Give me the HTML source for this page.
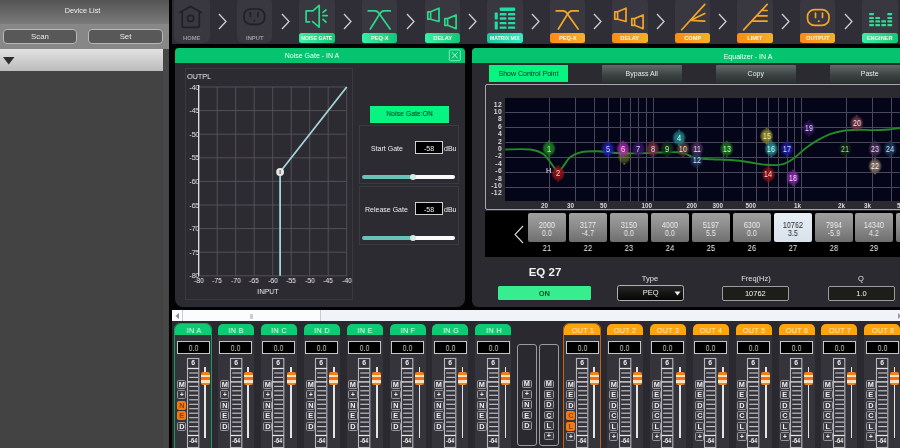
<!DOCTYPE html><html><head><meta charset="utf-8"><style>
*{margin:0;padding:0;box-sizing:border-box}
html,body{width:900px;height:448px;overflow:hidden;background:#030304;font-family:"Liberation Sans", sans-serif;}
.a{position:absolute}
.t{position:absolute;white-space:nowrap;line-height:1;will-change:transform}
</style></head><body>
<div class="a" style="left:0;top:0;width:168.5px;height:448px;background:#434343"></div>
<div class="a" style="left:0;top:0;width:168.5px;height:24px;background:linear-gradient(#545454,#7a7a7a)"></div>
<div class="a" style="left:0;top:24px;width:168.5px;height:25px;background:#878787"></div>
<div class="t" style="left:0.00px;top:7.08px;width:165px;text-align:center;font-size:7.3px;color:#f0f0f0;">Device List</div>
<div class="a" style="left:3px;top:29px;width:74px;height:15px;background:#585858;border:1.8px solid #b8b8b8;border-radius:4px"></div>
<div class="t" style="left:3.00px;top:33.14px;width:74px;text-align:center;font-size:7.8px;color:#eaeaea;">Scan</div>
<div class="a" style="left:88px;top:29px;width:75px;height:15px;background:#585858;border:1.8px solid #b8b8b8;border-radius:4px"></div>
<div class="t" style="left:88.00px;top:33.14px;width:75px;text-align:center;font-size:7.8px;color:#eaeaea;">Set</div>
<div class="a" style="left:0;top:49px;width:163.4px;height:21.8px;background:linear-gradient(#e2e2e2,#bcbcbc)"></div>
<div class="a" style="left:163.4px;top:49px;width:5.1px;height:399px;background:#474747"></div>
<svg class="a" style="left:0;top:50px" width="20" height="21"><path d="M3,7 L14.5,7 L8.7,14.5 Z" fill="#2e2e2e"/></svg>
<div class="a" style="left:172px;top:0;width:728px;height:44px;background:#2f2d35"></div>
<div class="a" style="left:174.3px;top:-3px;width:35.5px;height:46px;background:#39373f;border-radius:6px"></div>
<svg class="a" style="left:174.3px;top:1px" width="36" height="33"><path d="M5.8,11.4 L16.5,5.5 L27.6,11.4 M8.2,10.2 V24.6 Q8.2,26.4 10,26.4 H23.5 Q25.3,26.4 25.3,24.6 V10.2" stroke="#222027" fill="none" stroke-width="1.7" stroke-linecap="round" stroke-linejoin="round" stroke-width="2"/><circle cx="16.6" cy="17.4" r="3.1" stroke="#222027" fill="none" stroke-width="1.7" stroke-linecap="round" stroke-linejoin="round" stroke-width="2"/></svg>
<div class="t" style="left:174.30px;top:36.30px;width:35.5px;text-align:center;font-size:5.8px;font-weight:bold;color:#9a98a0;">HOME</div>
<svg class="a" style="left:217.0px;top:12px" width="12" height="20"><path d="M2,2 L9,9.5 L2,17" stroke="#cfcdd3" stroke-width="1.3" fill="none"/></svg>
<div class="a" style="left:236.9px;top:-3px;width:35.5px;height:46px;background:#39373f;border-radius:6px"></div>
<svg class="a" style="left:236.9px;top:1px" width="36" height="33"><rect x="7" y="8" width="20.6" height="15.3" rx="6.5" stroke="#222027" fill="none" stroke-width="1.7" stroke-linecap="round" stroke-linejoin="round" stroke-width="1.9"/><path d="M13.3,11.6 V15.4 M21,11.6 V15.4" stroke="#222027" fill="none" stroke-width="1.7" stroke-linecap="round" stroke-linejoin="round" stroke-width="1.9"/><circle cx="17.3" cy="19.6" r="1" fill="#222027"/></svg>
<div class="t" style="left:236.85px;top:36.30px;width:35.5px;text-align:center;font-size:5.8px;font-weight:bold;color:#9a98a0;">INPUT</div>
<svg class="a" style="left:279.6px;top:12px" width="12" height="20"><path d="M2,2 L9,9.5 L2,17" stroke="#cfcdd3" stroke-width="1.3" fill="none"/></svg>
<div class="a" style="left:299.4px;top:-3px;width:35.5px;height:46px;background:#39373f;border-radius:6px"></div>
<svg class="a" style="left:299.4px;top:1px" width="36" height="33"><path d="M13.9,9.8 H7.1 V20.8 H10.5 M13.6,20.6 L20.2,26.2 V4.3 L13.9,9.8" stroke="#2ad98c" fill="none" stroke-width="1.7" stroke-linecap="round" stroke-linejoin="round" stroke-width="1.8"/><path d="M24,11.4 L27,9 M24,14.6 H28.2 M24,18.4 L27,21.2" stroke="#2ad98c" fill="none" stroke-width="1.7" stroke-linecap="round" stroke-linejoin="round" stroke-width="1.6"/></svg>
<div class="a" style="left:299.4px;top:33.2px;width:35.5px;height:10.2px;background:linear-gradient(90deg,#36f0a6,#14c676);border-radius:2.5px"></div>
<div class="t" style="left:299.40px;top:36.34px;width:35.5px;text-align:center;font-size:5.1px;font-weight:bold;color:#fdfbe8;">NOISE GATE</div>
<svg class="a" style="left:342.1px;top:12px" width="12" height="20"><path d="M2,2 L9,9.5 L2,17" stroke="#cfcdd3" stroke-width="1.3" fill="none"/></svg>
<div class="a" style="left:361.9px;top:-3px;width:35.5px;height:46px;background:#39373f;border-radius:6px"></div>
<svg class="a" style="left:361.9px;top:1px" width="36" height="33"><path d="M6.2,9.9 H13.2 Q16.2,10 18,13.8 L28.1,28" stroke="#2ad98c" fill="none" stroke-width="1.7" stroke-linecap="round" stroke-linejoin="round" stroke-width="1.8"/><path d="M28.3,9.9 H21.8 Q19.2,10 17.2,13.8 L8.3,28" stroke="#2ad98c" fill="none" stroke-width="1.7" stroke-linecap="round" stroke-linejoin="round" stroke-width="1.8"/></svg>
<div class="a" style="left:361.9px;top:33.2px;width:35.5px;height:10.2px;background:linear-gradient(90deg,#36f0a6,#14c676);border-radius:2.5px"></div>
<div class="t" style="left:361.95px;top:36.05px;width:35.5px;text-align:center;font-size:5.7px;font-weight:bold;color:#fdfbe8;">PEQ-X</div>
<svg class="a" style="left:404.6px;top:12px" width="12" height="20"><path d="M2,2 L9,9.5 L2,17" stroke="#cfcdd3" stroke-width="1.3" fill="none"/></svg>
<div class="a" style="left:424.5px;top:-3px;width:35.5px;height:46px;background:#39373f;border-radius:6px"></div>
<svg class="a" style="left:424.5px;top:1px" width="36" height="33"><path d="M5.6,10.8 H2.8 V18.2 H5.6 Z M5.6,10.8 L14,7.2 V20.5 L5.6,18.2" stroke="#2ad98c" fill="none" stroke-width="1.7" stroke-linecap="round" stroke-linejoin="round" stroke-width="1.5"/><path d="M22.6,17.6 H19.8 V24.3 H22.6 Z M22.6,17.6 L31.1,14 V27.7 L22.6,24.3" stroke="#2ad98c" fill="none" stroke-width="1.7" stroke-linecap="round" stroke-linejoin="round" stroke-width="1.5"/></svg>
<div class="a" style="left:424.5px;top:33.2px;width:35.5px;height:10.2px;background:linear-gradient(90deg,#36f0a6,#14c676);border-radius:2.5px"></div>
<div class="t" style="left:424.50px;top:36.05px;width:35.5px;text-align:center;font-size:5.7px;font-weight:bold;color:#fdfbe8;">DELAY</div>
<svg class="a" style="left:467.2px;top:12px" width="12" height="20"><path d="M2,2 L9,9.5 L2,17" stroke="#cfcdd3" stroke-width="1.3" fill="none"/></svg>
<div class="a" style="left:487.1px;top:-3px;width:35.5px;height:46px;background:#39373f;border-radius:6px"></div>
<svg class="a" style="left:487.1px;top:1px" width="36" height="33"><rect x="12.7" y="6.4" width="15.5" height="3.5" rx="0.8" fill="#22dca6"/><rect x="7.7" y="11.4" width="3.1" height="7.2" rx="0.8" fill="#22dca6"/><rect x="7.7" y="20.5" width="3.1" height="8" rx="0.8" fill="#22dca6"/><rect x="12.7" y="12.1" width="6.8" height="2.4" rx="0.6" fill="#22dca6"/><rect x="21" y="12.1" width="7.2" height="2.4" rx="0.6" fill="#22dca6"/><rect x="12.7" y="16.3" width="6.8" height="2.4" rx="0.6" fill="#22dca6"/><rect x="21" y="16.3" width="7.2" height="2.4" rx="0.6" fill="#22dca6"/><rect x="12.7" y="20.9" width="6.8" height="2.4" rx="0.6" fill="#22dca6"/><rect x="21" y="20.9" width="7.2" height="2.4" rx="0.6" fill="#22dca6"/><rect x="12.7" y="25.4" width="6.8" height="2.4" rx="0.6" fill="#22dca6"/><rect x="21" y="25.4" width="7.2" height="2.4" rx="0.6" fill="#22dca6"/></svg>
<div class="a" style="left:487.1px;top:33.2px;width:35.5px;height:10.2px;background:linear-gradient(90deg,#14c6a2,#34eac2);border-radius:2.5px"></div>
<div class="t" style="left:487.05px;top:36.34px;width:35.5px;text-align:center;font-size:5.1px;font-weight:bold;color:#fdfbe8;">MATRIX MIX</div>
<svg class="a" style="left:529.8px;top:12px" width="12" height="20"><path d="M2,2 L9,9.5 L2,17" stroke="#cfcdd3" stroke-width="1.3" fill="none"/></svg>
<div class="a" style="left:549.6px;top:-3px;width:35.5px;height:46px;background:#39373f;border-radius:6px"></div>
<svg class="a" style="left:549.6px;top:1px" width="36" height="33"><path d="M6.2,9.9 H13.2 Q16.2,10 18,13.8 L28.1,28" stroke="#f3a52a" fill="none" stroke-width="1.7" stroke-linecap="round" stroke-linejoin="round" stroke-width="1.8"/><path d="M28.3,9.9 H21.8 Q19.2,10 17.2,13.8 L8.3,28" stroke="#f3a52a" fill="none" stroke-width="1.7" stroke-linecap="round" stroke-linejoin="round" stroke-width="1.8"/></svg>
<div class="a" style="left:549.6px;top:33.2px;width:35.5px;height:10.2px;background:linear-gradient(90deg,#ff8a12,#f4b02a);border-radius:2.5px"></div>
<div class="t" style="left:549.60px;top:36.05px;width:35.5px;text-align:center;font-size:5.7px;font-weight:bold;color:#fdfbe8;">PEQ-X</div>
<svg class="a" style="left:592.3px;top:12px" width="12" height="20"><path d="M2,2 L9,9.5 L2,17" stroke="#cfcdd3" stroke-width="1.3" fill="none"/></svg>
<div class="a" style="left:612.1px;top:-3px;width:35.5px;height:46px;background:#39373f;border-radius:6px"></div>
<svg class="a" style="left:612.1px;top:1px" width="36" height="33"><path d="M5.6,10.8 H2.8 V18.2 H5.6 Z M5.6,10.8 L14,7.2 V20.5 L5.6,18.2" stroke="#f3a52a" fill="none" stroke-width="1.7" stroke-linecap="round" stroke-linejoin="round" stroke-width="1.5"/><path d="M22.6,17.6 H19.8 V24.3 H22.6 Z M22.6,17.6 L31.1,14 V27.7 L22.6,24.3" stroke="#f3a52a" fill="none" stroke-width="1.7" stroke-linecap="round" stroke-linejoin="round" stroke-width="1.5"/></svg>
<div class="a" style="left:612.1px;top:33.2px;width:35.5px;height:10.2px;background:linear-gradient(90deg,#ff8a12,#f4b02a);border-radius:2.5px"></div>
<div class="t" style="left:612.15px;top:36.05px;width:35.5px;text-align:center;font-size:5.7px;font-weight:bold;color:#fdfbe8;">DELAY</div>
<svg class="a" style="left:654.9px;top:12px" width="12" height="20"><path d="M2,2 L9,9.5 L2,17" stroke="#cfcdd3" stroke-width="1.3" fill="none"/></svg>
<div class="a" style="left:674.7px;top:-3px;width:35.5px;height:46px;background:#39373f;border-radius:6px"></div>
<svg class="a" style="left:674.7px;top:1px" width="36" height="33"><path d="M6.7,28.8 L29.8,3.4 M15.8,19.3 L29.8,12.5 M15.8,19.3 L29.8,20.1" stroke="#f3a52a" fill="none" stroke-width="1.7" stroke-linecap="round" stroke-linejoin="round" stroke-width="1.9"/></svg>
<div class="a" style="left:674.7px;top:33.2px;width:35.5px;height:10.2px;background:linear-gradient(90deg,#ff8a12,#f4b02a);border-radius:2.5px"></div>
<div class="t" style="left:674.70px;top:36.05px;width:35.5px;text-align:center;font-size:5.7px;font-weight:bold;color:#fdfbe8;">COMP</div>
<svg class="a" style="left:717.4px;top:12px" width="12" height="20"><path d="M2,2 L9,9.5 L2,17" stroke="#cfcdd3" stroke-width="1.3" fill="none"/></svg>
<div class="a" style="left:737.2px;top:-3px;width:35.5px;height:46px;background:#39373f;border-radius:6px"></div>
<svg class="a" style="left:737.2px;top:1px" width="36" height="33"><path d="M6.6,28.8 L30.1,3.4 M25,9.5 H30.1 M20.5,14.8 H30.1 M16,20.1 H30.1" stroke="#f3a52a" fill="none" stroke-width="1.7" stroke-linecap="round" stroke-linejoin="round" stroke-width="1.9"/></svg>
<div class="a" style="left:737.2px;top:33.2px;width:35.5px;height:10.2px;background:linear-gradient(90deg,#ff8a12,#f4b02a);border-radius:2.5px"></div>
<div class="t" style="left:737.25px;top:36.05px;width:35.5px;text-align:center;font-size:5.7px;font-weight:bold;color:#fdfbe8;">LIMIT</div>
<svg class="a" style="left:780.0px;top:12px" width="12" height="20"><path d="M2,2 L9,9.5 L2,17" stroke="#cfcdd3" stroke-width="1.3" fill="none"/></svg>
<div class="a" style="left:799.8px;top:-3px;width:35.5px;height:46px;background:#39373f;border-radius:6px"></div>
<svg class="a" style="left:799.8px;top:1px" width="36" height="33"><rect x="7.5" y="8.6" width="21.5" height="15.8" rx="7" stroke="#f3a52a" fill="none" stroke-width="1.7" stroke-linecap="round" stroke-linejoin="round" stroke-width="1.8"/><path d="M15.5,12 V16.5 M22.5,12 V16.5" stroke="#f3a52a" fill="none" stroke-width="1.7" stroke-linecap="round" stroke-linejoin="round" stroke-width="1.7"/><circle cx="18.8" cy="20.2" r="1" fill="#f3a52a"/></svg>
<div class="a" style="left:799.8px;top:33.2px;width:35.5px;height:10.2px;background:linear-gradient(90deg,#ff8a12,#f4b02a);border-radius:2.5px"></div>
<div class="t" style="left:799.80px;top:36.05px;width:35.5px;text-align:center;font-size:5.7px;font-weight:bold;color:#fdfbe8;">OUTPUT</div>
<svg class="a" style="left:842.5px;top:12px" width="12" height="20"><path d="M2,2 L9,9.5 L2,17" stroke="#cfcdd3" stroke-width="1.3" fill="none"/></svg>
<div class="a" style="left:862.3px;top:-3px;width:35.5px;height:46px;background:#39373f;border-radius:6px"></div>
<svg class="a" style="left:862.3px;top:1px" width="36" height="33"><rect x="7.2" y="12.1" width="4.7" height="2.1" rx="0.5" fill="#3ad894"/><rect x="7.2" y="15.9" width="4.7" height="2.1" rx="0.5" fill="#3ad894"/><rect x="7.2" y="19.3" width="4.7" height="2.1" rx="0.5" fill="#3ad894"/><rect x="7.2" y="23.1" width="4.7" height="2.1" rx="0.5" fill="#3ad894"/><rect x="13.3" y="15.9" width="4.7" height="2.1" rx="0.5" fill="#3ad894"/><rect x="13.3" y="19.3" width="4.7" height="2.1" rx="0.5" fill="#3ad894"/><rect x="13.3" y="23.1" width="4.7" height="2.1" rx="0.5" fill="#3ad894"/><rect x="19.3" y="19.3" width="4.7" height="2.1" rx="0.5" fill="#3ad894"/><rect x="19.3" y="23.1" width="4.7" height="2.1" rx="0.5" fill="#3ad894"/><rect x="25.4" y="12.1" width="4.7" height="2.1" rx="0.5" fill="#3ad894"/><rect x="25.4" y="15.9" width="4.7" height="2.1" rx="0.5" fill="#3ad894"/><rect x="25.4" y="19.3" width="4.7" height="2.1" rx="0.5" fill="#3ad894"/><rect x="25.4" y="23.1" width="4.7" height="2.1" rx="0.5" fill="#3ad894"/></svg>
<div class="a" style="left:862.3px;top:33.2px;width:35.5px;height:10.2px;background:linear-gradient(90deg,#36f0a6,#14c676);border-radius:2.5px"></div>
<div class="t" style="left:862.35px;top:36.05px;width:35.5px;text-align:center;font-size:5.7px;font-weight:bold;color:#fdfbe8;">ENGINER</div>
<div class="a" style="left:175px;top:48px;width:290px;height:258.5px;background:#2d2b32;border-radius:4px 4px 8px 8px;overflow:hidden"><div class="a" style="left:0;top:0;width:290px;height:15px;background:#04c470"></div></div>
<div class="t" style="left:262.00px;top:52.43px;width:100px;text-align:center;font-size:7px;color:#f4fff8;">Noise Gate - IN A</div>
<svg class="a" style="left:448px;top:49px" width="14" height="13"><rect x="1.3" y="0.9" width="11" height="10.8" rx="1" fill="none" stroke="#8aeec0" stroke-width="0.9"/><path d="M4,3.4 L9.6,9.2 M9.6,3.4 L4,9.2" stroke="#b8f8d8" stroke-width="1"/></svg>
<svg class="a" style="left:0;top:0" width="470" height="310"><rect x="185.5" y="68.5" width="167" height="231" fill="none" stroke="#3a3840" stroke-width="1"/><line x1="217.2" y1="87.0" x2="217.2" y2="275.8" stroke="#56545c" stroke-width="0.9"/><line x1="235.7" y1="87.0" x2="235.7" y2="275.8" stroke="#56545c" stroke-width="0.9"/><line x1="254.2" y1="87.0" x2="254.2" y2="275.8" stroke="#56545c" stroke-width="0.9"/><line x1="272.7" y1="87.0" x2="272.7" y2="275.8" stroke="#56545c" stroke-width="0.9"/><line x1="291.2" y1="87.0" x2="291.2" y2="275.8" stroke="#56545c" stroke-width="0.9"/><line x1="309.7" y1="87.0" x2="309.7" y2="275.8" stroke="#56545c" stroke-width="0.9"/><line x1="328.2" y1="87.0" x2="328.2" y2="275.8" stroke="#56545c" stroke-width="0.9"/><line x1="346.7" y1="87.0" x2="346.7" y2="275.8" stroke="#56545c" stroke-width="0.9"/><line x1="198.7" y1="87.0" x2="346.7" y2="87.0" stroke="#56545c" stroke-width="0.9"/><line x1="198.7" y1="110.6" x2="346.7" y2="110.6" stroke="#56545c" stroke-width="0.9"/><line x1="198.7" y1="134.2" x2="346.7" y2="134.2" stroke="#56545c" stroke-width="0.9"/><line x1="198.7" y1="157.8" x2="346.7" y2="157.8" stroke="#56545c" stroke-width="0.9"/><line x1="198.7" y1="181.4" x2="346.7" y2="181.4" stroke="#56545c" stroke-width="0.9"/><line x1="198.7" y1="205.0" x2="346.7" y2="205.0" stroke="#56545c" stroke-width="0.9"/><line x1="198.7" y1="228.6" x2="346.7" y2="228.6" stroke="#56545c" stroke-width="0.9"/><line x1="198.7" y1="252.2" x2="346.7" y2="252.2" stroke="#56545c" stroke-width="0.9"/><line x1="198.7" y1="275.8" x2="346.7" y2="275.8" stroke="#56545c" stroke-width="0.9"/><line x1="198.7" y1="85.0" x2="198.7" y2="275.8" stroke="#e6e6ea" stroke-width="1.3"/><path d="M346.7,87.0 L280.1,172.0 L280.1,275.8" fill="none" stroke="#a4d2d8" stroke-width="1.8"/><circle cx="280.1" cy="172.0" r="3.9" fill="#e6e6e6"/><path d="M280.1,170.0 V174.0" stroke="#505058" stroke-width="1"/></svg>
<div class="t" style="left:187.00px;top:73.14px;font-size:8px;color:#f0f0f0;transform:scaleX(0.9);transform-origin:left center;">OUTPL</div>
<div class="t" style="left:170.00px;top:83.64px;width:29.3px;text-align:right;font-size:8px;color:#e8e8ea;transform:scaleX(0.86);transform-origin:right center;">-40</div>
<div class="t" style="left:170.00px;top:107.24px;width:29.3px;text-align:right;font-size:8px;color:#e8e8ea;transform:scaleX(0.86);transform-origin:right center;">-45</div>
<div class="t" style="left:170.00px;top:130.84px;width:29.3px;text-align:right;font-size:8px;color:#e8e8ea;transform:scaleX(0.86);transform-origin:right center;">-50</div>
<div class="t" style="left:170.00px;top:154.44px;width:29.3px;text-align:right;font-size:8px;color:#e8e8ea;transform:scaleX(0.86);transform-origin:right center;">-55</div>
<div class="t" style="left:170.00px;top:178.04px;width:29.3px;text-align:right;font-size:8px;color:#e8e8ea;transform:scaleX(0.86);transform-origin:right center;">-60</div>
<div class="t" style="left:170.00px;top:201.64px;width:29.3px;text-align:right;font-size:8px;color:#e8e8ea;transform:scaleX(0.86);transform-origin:right center;">-65</div>
<div class="t" style="left:170.00px;top:225.24px;width:29.3px;text-align:right;font-size:8px;color:#e8e8ea;transform:scaleX(0.86);transform-origin:right center;">-70</div>
<div class="t" style="left:170.00px;top:248.84px;width:29.3px;text-align:right;font-size:8px;color:#e8e8ea;transform:scaleX(0.86);transform-origin:right center;">-75</div>
<div class="t" style="left:170.00px;top:272.44px;width:29.3px;text-align:right;font-size:8px;color:#e8e8ea;transform:scaleX(0.86);transform-origin:right center;">-80</div>
<div class="t" style="left:188.70px;top:277.14px;width:20px;text-align:center;font-size:8px;color:#e8e8ea;transform:scaleX(0.86);transform-origin:center center;">-80</div>
<div class="t" style="left:207.20px;top:277.14px;width:20px;text-align:center;font-size:8px;color:#e8e8ea;transform:scaleX(0.86);transform-origin:center center;">-75</div>
<div class="t" style="left:225.70px;top:277.14px;width:20px;text-align:center;font-size:8px;color:#e8e8ea;transform:scaleX(0.86);transform-origin:center center;">-70</div>
<div class="t" style="left:244.20px;top:277.14px;width:20px;text-align:center;font-size:8px;color:#e8e8ea;transform:scaleX(0.86);transform-origin:center center;">-65</div>
<div class="t" style="left:262.70px;top:277.14px;width:20px;text-align:center;font-size:8px;color:#e8e8ea;transform:scaleX(0.86);transform-origin:center center;">-60</div>
<div class="t" style="left:281.20px;top:277.14px;width:20px;text-align:center;font-size:8px;color:#e8e8ea;transform:scaleX(0.86);transform-origin:center center;">-55</div>
<div class="t" style="left:299.70px;top:277.14px;width:20px;text-align:center;font-size:8px;color:#e8e8ea;transform:scaleX(0.86);transform-origin:center center;">-50</div>
<div class="t" style="left:318.20px;top:277.14px;width:20px;text-align:center;font-size:8px;color:#e8e8ea;transform:scaleX(0.86);transform-origin:center center;">-45</div>
<div class="t" style="left:336.70px;top:277.14px;width:20px;text-align:center;font-size:8px;color:#e8e8ea;transform:scaleX(0.86);transform-origin:center center;">-40</div>
<div class="t" style="left:248.00px;top:288.34px;width:40px;text-align:center;font-size:8px;color:#e8e8ea;transform:scaleX(0.9);transform-origin:center center;">INPUT</div>
<div class="a" style="left:370px;top:105.5px;width:79px;height:17px;background:#06f47f"></div>
<div class="t" style="left:370.00px;top:110.43px;width:79px;text-align:center;font-size:7.4px;color:#0a2e18;transform:scaleX(0.93);transform-origin:center center;">Noise Gate:ON</div>
<div class="a" style="left:358.5px;top:125px;width:100px;height:59px;border:1px solid #3b3941"></div>
<div class="t" style="left:371.00px;top:144.63px;font-size:7px;color:#ececf0;">Start Gate</div>
<div class="a" style="left:415px;top:140.8px;width:28px;height:13.2px;background:#000;border:1.3px solid #cfcfcf"></div>
<div class="t" style="left:415.00px;top:144.63px;width:28px;text-align:center;font-size:7px;color:#f0f0f0;">-58</div>
<div class="t" style="left:444.00px;top:144.63px;font-size:7px;color:#ececf0;">dBu</div>
<div class="a" style="left:361.5px;top:175px;width:93px;height:4px;background:linear-gradient(90deg,#68c2ba 0,#68c2ba 51px,#fafafa 51px);border-radius:2px"></div>
<div class="a" style="left:409.5px;top:174px;width:6px;height:6px;background:#d4ece6;border-radius:50%"></div>
<div class="a" style="left:358.5px;top:186px;width:100px;height:59px;border:1px solid #3b3941"></div>
<div class="t" style="left:365.00px;top:206.13px;font-size:7px;color:#ececf0;">Release Gate</div>
<div class="a" style="left:415px;top:202.3px;width:28px;height:13.2px;background:#000;border:1.3px solid #cfcfcf"></div>
<div class="t" style="left:415.00px;top:206.13px;width:28px;text-align:center;font-size:7px;color:#f0f0f0;">-58</div>
<div class="t" style="left:444.00px;top:206.13px;font-size:7px;color:#ececf0;">dBu</div>
<div class="a" style="left:361.5px;top:236px;width:93px;height:4px;background:linear-gradient(90deg,#68c2ba 0,#68c2ba 51px,#fafafa 51px);border-radius:2px"></div>
<div class="a" style="left:409.5px;top:235px;width:6px;height:6px;background:#d4ece6;border-radius:50%"></div>
<div class="a" style="left:472px;top:48px;width:520px;height:259px;background:#2c2a31;border-radius:4px 4px 6px 6px;overflow:hidden"><div class="a" style="left:0;top:0;width:520px;height:15px;background:#04c470"></div></div>
<div class="t" style="left:698.00px;top:52.63px;width:100px;text-align:center;font-size:7px;color:#f4fff8;">Equalizer - IN A</div>
<div class="a" style="left:489px;top:65px;width:79px;height:17px;background:#06f47f"></div>
<div class="t" style="left:489.00px;top:70.03px;width:79px;text-align:center;font-size:7px;color:#0a2e18;">Show Control Point</div>
<div class="a" style="left:602.4px;top:65px;width:79.5px;height:18px;background:linear-gradient(#606a6a,#3c4443 55%,#2a302f);border-radius:1px"></div>
<div class="t" style="left:602.40px;top:70.23px;width:79.5px;text-align:center;font-size:7px;color:#e4ecea;">Bypass All</div>
<div class="a" style="left:716.1px;top:65px;width:79.5px;height:18px;background:linear-gradient(#606a6a,#3c4443 55%,#2a302f);border-radius:1px"></div>
<div class="t" style="left:716.10px;top:70.23px;width:79.5px;text-align:center;font-size:7px;color:#e4ecea;">Copy</div>
<div class="a" style="left:829.8px;top:65px;width:79.5px;height:18px;background:linear-gradient(#606a6a,#3c4443 55%,#2a302f);border-radius:1px"></div>
<div class="t" style="left:829.80px;top:70.23px;width:79.5px;text-align:center;font-size:7px;color:#e4ecea;">Paste</div>
<div class="a" style="left:485px;top:84.3px;width:520px;height:125.7px;border:1.5px solid #a7a5ae;border-radius:2px"></div>
<div class="a" style="left:505.3px;top:97.7px;width:420px;height:103.6px;background:#05051a"></div>
<svg class="a" style="left:0;top:0" width="900" height="215"><defs><filter id="bl" x="-50%" y="-50%" width="200%" height="200%"><feGaussianBlur stdDeviation="0.7"/></filter></defs><line x1="505.3" y1="112.5" x2="900" y2="112.5" stroke="#484658" stroke-width="1"/><line x1="505.3" y1="127.5" x2="900" y2="127.5" stroke="#484658" stroke-width="1"/><line x1="505.3" y1="142.5" x2="900" y2="142.5" stroke="#484658" stroke-width="1"/><line x1="505.3" y1="157.5" x2="900" y2="157.5" stroke="#484658" stroke-width="1"/><line x1="505.3" y1="172.5" x2="900" y2="172.5" stroke="#484658" stroke-width="1"/><line x1="505.3" y1="187.5" x2="900" y2="187.5" stroke="#484658" stroke-width="1"/><line x1="549.5" y1="97.7" x2="549.5" y2="201.3" stroke="#484658" stroke-width="1"/><line x1="575.5" y1="97.7" x2="575.5" y2="201.3" stroke="#484658" stroke-width="1"/><line x1="594.5" y1="97.7" x2="594.5" y2="201.3" stroke="#484658" stroke-width="1"/><line x1="608.5" y1="97.7" x2="608.5" y2="201.3" stroke="#484658" stroke-width="1"/><line x1="620.5" y1="97.7" x2="620.5" y2="201.3" stroke="#484658" stroke-width="1"/><line x1="630.5" y1="97.7" x2="630.5" y2="201.3" stroke="#484658" stroke-width="1"/><line x1="638.5" y1="97.7" x2="638.5" y2="201.3" stroke="#484658" stroke-width="1"/><line x1="646.5" y1="97.7" x2="646.5" y2="201.3" stroke="#484658" stroke-width="1"/><line x1="653.5" y1="97.7" x2="653.5" y2="201.3" stroke="#484658" stroke-width="1"/><line x1="697.5" y1="97.7" x2="697.5" y2="201.3" stroke="#484658" stroke-width="1"/><line x1="723.5" y1="97.7" x2="723.5" y2="201.3" stroke="#484658" stroke-width="1"/><line x1="742.5" y1="97.7" x2="742.5" y2="201.3" stroke="#484658" stroke-width="1"/><line x1="756.5" y1="97.7" x2="756.5" y2="201.3" stroke="#484658" stroke-width="1"/><line x1="768.5" y1="97.7" x2="768.5" y2="201.3" stroke="#484658" stroke-width="1"/><line x1="778.5" y1="97.7" x2="778.5" y2="201.3" stroke="#484658" stroke-width="1"/><line x1="787.5" y1="97.7" x2="787.5" y2="201.3" stroke="#484658" stroke-width="1"/><line x1="794.5" y1="97.7" x2="794.5" y2="201.3" stroke="#484658" stroke-width="1"/><line x1="801.5" y1="97.7" x2="801.5" y2="201.3" stroke="#484658" stroke-width="1"/><line x1="846.5" y1="97.7" x2="846.5" y2="201.3" stroke="#484658" stroke-width="1"/><line x1="872.5" y1="97.7" x2="872.5" y2="201.3" stroke="#484658" stroke-width="1"/><line x1="891.5" y1="97.7" x2="891.5" y2="201.3" stroke="#484658" stroke-width="1"/><path d="M505.3,149.5 C509.5,149.5 523.8,148.7 530.2,149.5 C536.6,150.3 539.6,151.3 543.6,154.3 C547.6,157.3 551.8,164.8 554.3,167.7 C556.8,170.6 557.0,171.7 558.3,171.7 C559.6,171.7 560.3,170.1 562.3,167.7 C564.3,165.2 567.3,159.6 570.4,157.0 C573.5,154.4 576.6,153.1 581.1,152.2 C585.6,151.2 592.8,151.3 597.1,151.3 C601.5,151.3 603.5,151.7 607.2,152.0 C610.9,152.3 615.3,152.9 619.4,153.1 C623.5,153.3 627.6,153.4 631.7,153.4 C635.8,153.4 639.8,153.2 643.9,153.1 C648.0,153.0 652.0,152.8 656.1,152.6 C660.2,152.4 664.6,152.3 668.3,152.2 C672.0,152.1 675.3,152.0 678.1,152.2 C680.9,152.4 682.5,152.8 685.0,153.6 C687.5,154.4 690.3,156.4 692.8,157.2 C695.3,158.0 696.8,158.3 700.0,158.6 C703.2,158.9 706.5,158.9 712.1,159.2 C717.7,159.5 727.4,159.7 733.6,160.2 C739.9,160.7 744.2,161.5 749.6,162.3 C755.0,163.1 760.8,164.4 765.7,164.8 C770.6,165.2 775.5,165.3 779.1,164.9 C782.7,164.5 784.5,163.8 787.2,162.5 C789.9,161.2 792.1,159.6 795.2,157.2 C798.3,154.8 802.3,150.7 805.9,148.0 C809.5,145.3 812.6,143.2 816.6,140.9 C820.6,138.6 825.5,135.9 830.0,134.2 C834.5,132.5 838.9,131.4 843.4,130.7 C847.9,129.9 851.9,129.8 856.8,129.7 C861.7,129.6 867.5,130.1 872.9,130.1 C878.3,130.1 884.5,129.8 889.0,129.5 C893.5,129.2 898.2,128.2 900.0,128.0" fill="none" stroke="#248a26" stroke-width="1.9"/><defs><radialGradient id="g3" cx="50%" cy="50%" r="50%"><stop offset="0" stop-color="#8a9a20" stop-opacity="0.95"/><stop offset="0.65" stop-color="#8a9a20" stop-opacity="0.8"/><stop offset="1" stop-color="#8a9a20" stop-opacity="0.12"/></radialGradient><radialGradient id="g1" cx="50%" cy="50%" r="50%"><stop offset="0" stop-color="#1f8a22" stop-opacity="0.95"/><stop offset="0.65" stop-color="#1f8a22" stop-opacity="0.8"/><stop offset="1" stop-color="#1f8a22" stop-opacity="0.12"/></radialGradient><radialGradient id="g2" cx="50%" cy="50%" r="50%"><stop offset="0" stop-color="#9a1414" stop-opacity="0.95"/><stop offset="0.65" stop-color="#9a1414" stop-opacity="0.8"/><stop offset="1" stop-color="#9a1414" stop-opacity="0.12"/></radialGradient><radialGradient id="g5" cx="50%" cy="50%" r="50%"><stop offset="0" stop-color="#2020b8" stop-opacity="0.95"/><stop offset="0.65" stop-color="#2020b8" stop-opacity="0.8"/><stop offset="1" stop-color="#2020b8" stop-opacity="0.12"/></radialGradient><radialGradient id="g6" cx="50%" cy="50%" r="50%"><stop offset="0" stop-color="#a828a8" stop-opacity="0.95"/><stop offset="0.65" stop-color="#a828a8" stop-opacity="0.8"/><stop offset="1" stop-color="#a828a8" stop-opacity="0.12"/></radialGradient><radialGradient id="g7" cx="50%" cy="50%" r="50%"><stop offset="0" stop-color="#3a1866" stop-opacity="0.95"/><stop offset="0.65" stop-color="#3a1866" stop-opacity="0.8"/><stop offset="1" stop-color="#3a1866" stop-opacity="0.12"/></radialGradient><radialGradient id="g8" cx="50%" cy="50%" r="50%"><stop offset="0" stop-color="#74303e" stop-opacity="0.95"/><stop offset="0.65" stop-color="#74303e" stop-opacity="0.8"/><stop offset="1" stop-color="#74303e" stop-opacity="0.12"/></radialGradient><radialGradient id="g9" cx="50%" cy="50%" r="50%"><stop offset="0" stop-color="#143c16" stop-opacity="0.95"/><stop offset="0.65" stop-color="#143c16" stop-opacity="0.8"/><stop offset="1" stop-color="#143c16" stop-opacity="0.12"/></radialGradient><radialGradient id="g10" cx="50%" cy="50%" r="50%"><stop offset="0" stop-color="#5c4032" stop-opacity="0.95"/><stop offset="0.65" stop-color="#5c4032" stop-opacity="0.8"/><stop offset="1" stop-color="#5c4032" stop-opacity="0.12"/></radialGradient><radialGradient id="g4" cx="50%" cy="50%" r="50%"><stop offset="0" stop-color="#1e8c8c" stop-opacity="0.95"/><stop offset="0.65" stop-color="#1e8c8c" stop-opacity="0.8"/><stop offset="1" stop-color="#1e8c8c" stop-opacity="0.12"/></radialGradient><radialGradient id="g11" cx="50%" cy="50%" r="50%"><stop offset="0" stop-color="#4a3058" stop-opacity="0.95"/><stop offset="0.65" stop-color="#4a3058" stop-opacity="0.8"/><stop offset="1" stop-color="#4a3058" stop-opacity="0.12"/></radialGradient><radialGradient id="g12" cx="50%" cy="50%" r="50%"><stop offset="0" stop-color="#1e3a5c" stop-opacity="0.95"/><stop offset="0.65" stop-color="#1e3a5c" stop-opacity="0.8"/><stop offset="1" stop-color="#1e3a5c" stop-opacity="0.12"/></radialGradient><radialGradient id="g13" cx="50%" cy="50%" r="50%"><stop offset="0" stop-color="#1c7a1c" stop-opacity="0.95"/><stop offset="0.65" stop-color="#1c7a1c" stop-opacity="0.8"/><stop offset="1" stop-color="#1c7a1c" stop-opacity="0.12"/></radialGradient><radialGradient id="g14" cx="50%" cy="50%" r="50%"><stop offset="0" stop-color="#9a1414" stop-opacity="0.95"/><stop offset="0.65" stop-color="#9a1414" stop-opacity="0.8"/><stop offset="1" stop-color="#9a1414" stop-opacity="0.12"/></radialGradient><radialGradient id="g16" cx="50%" cy="50%" r="50%"><stop offset="0" stop-color="#2a9496" stop-opacity="0.95"/><stop offset="0.65" stop-color="#2a9496" stop-opacity="0.8"/><stop offset="1" stop-color="#2a9496" stop-opacity="0.12"/></radialGradient><radialGradient id="g15" cx="50%" cy="50%" r="50%"><stop offset="0" stop-color="#9a9430" stop-opacity="0.95"/><stop offset="0.65" stop-color="#9a9430" stop-opacity="0.8"/><stop offset="1" stop-color="#9a9430" stop-opacity="0.12"/></radialGradient><radialGradient id="g17" cx="50%" cy="50%" r="50%"><stop offset="0" stop-color="#1c1ca0" stop-opacity="0.95"/><stop offset="0.65" stop-color="#1c1ca0" stop-opacity="0.8"/><stop offset="1" stop-color="#1c1ca0" stop-opacity="0.12"/></radialGradient><radialGradient id="g18" cx="50%" cy="50%" r="50%"><stop offset="0" stop-color="#8a2aaa" stop-opacity="0.95"/><stop offset="0.65" stop-color="#8a2aaa" stop-opacity="0.8"/><stop offset="1" stop-color="#8a2aaa" stop-opacity="0.12"/></radialGradient><radialGradient id="g19" cx="50%" cy="50%" r="50%"><stop offset="0" stop-color="#341860" stop-opacity="0.95"/><stop offset="0.65" stop-color="#341860" stop-opacity="0.8"/><stop offset="1" stop-color="#341860" stop-opacity="0.12"/></radialGradient><radialGradient id="g20" cx="50%" cy="50%" r="50%"><stop offset="0" stop-color="#7a3a4a" stop-opacity="0.95"/><stop offset="0.65" stop-color="#7a3a4a" stop-opacity="0.8"/><stop offset="1" stop-color="#7a3a4a" stop-opacity="0.12"/></radialGradient><radialGradient id="g21" cx="50%" cy="50%" r="50%"><stop offset="0" stop-color="#0e2a10" stop-opacity="0.95"/><stop offset="0.65" stop-color="#0e2a10" stop-opacity="0.8"/><stop offset="1" stop-color="#0e2a10" stop-opacity="0.12"/></radialGradient><radialGradient id="g22" cx="50%" cy="50%" r="50%"><stop offset="0" stop-color="#8a7a6a" stop-opacity="0.95"/><stop offset="0.65" stop-color="#8a7a6a" stop-opacity="0.8"/><stop offset="1" stop-color="#8a7a6a" stop-opacity="0.12"/></radialGradient><radialGradient id="g23" cx="50%" cy="50%" r="50%"><stop offset="0" stop-color="#4a3058" stop-opacity="0.95"/><stop offset="0.65" stop-color="#4a3058" stop-opacity="0.8"/><stop offset="1" stop-color="#4a3058" stop-opacity="0.12"/></radialGradient><radialGradient id="g24" cx="50%" cy="50%" r="50%"><stop offset="0" stop-color="#1a3a5a" stop-opacity="0.95"/><stop offset="0.65" stop-color="#1a3a5a" stop-opacity="0.8"/><stop offset="1" stop-color="#1a3a5a" stop-opacity="0.12"/></radialGradient></defs><ellipse cx="624.3" cy="156.3" rx="6.9" ry="7.9" fill="url(#g3)" opacity="0.55"/><line x1="624.3" y1="148.0" x2="624.3" y2="149.70000000000002" stroke="#8a9a20" stroke-width="2" opacity="0.6"/><line x1="624.3" y1="162.9" x2="624.3" y2="164.60000000000002" stroke="#8a9a20" stroke-width="2" opacity="0.6"/><ellipse cx="549" cy="148.6" rx="6.9" ry="7.9" fill="url(#g1)" opacity="0.95"/><line x1="549" y1="140.29999999999998" x2="549" y2="142.0" stroke="#1f8a22" stroke-width="2" opacity="0.6"/><line x1="549" y1="155.2" x2="549" y2="156.9" stroke="#1f8a22" stroke-width="2" opacity="0.6"/><ellipse cx="558.2" cy="173.5" rx="6.9" ry="7.9" fill="url(#g2)" opacity="0.95"/><line x1="558.2" y1="165.2" x2="558.2" y2="166.9" stroke="#9a1414" stroke-width="2" opacity="0.6"/><line x1="558.2" y1="180.1" x2="558.2" y2="181.8" stroke="#9a1414" stroke-width="2" opacity="0.6"/><ellipse cx="607.8" cy="149" rx="6.9" ry="7.9" fill="url(#g5)" opacity="0.95"/><line x1="607.8" y1="140.7" x2="607.8" y2="142.4" stroke="#2020b8" stroke-width="2" opacity="0.6"/><line x1="607.8" y1="155.6" x2="607.8" y2="157.3" stroke="#2020b8" stroke-width="2" opacity="0.6"/><ellipse cx="623.1" cy="149" rx="6.9" ry="7.9" fill="url(#g6)" opacity="0.95"/><line x1="623.1" y1="140.7" x2="623.1" y2="142.4" stroke="#a828a8" stroke-width="2" opacity="0.6"/><line x1="623.1" y1="155.6" x2="623.1" y2="157.3" stroke="#a828a8" stroke-width="2" opacity="0.6"/><ellipse cx="638.4" cy="149" rx="6.9" ry="7.9" fill="url(#g7)" opacity="0.95"/><line x1="638.4" y1="140.7" x2="638.4" y2="142.4" stroke="#3a1866" stroke-width="2" opacity="0.6"/><line x1="638.4" y1="155.6" x2="638.4" y2="157.3" stroke="#3a1866" stroke-width="2" opacity="0.6"/><ellipse cx="652.5" cy="149" rx="6.9" ry="7.9" fill="url(#g8)" opacity="0.95"/><line x1="652.5" y1="140.7" x2="652.5" y2="142.4" stroke="#74303e" stroke-width="2" opacity="0.6"/><line x1="652.5" y1="155.6" x2="652.5" y2="157.3" stroke="#74303e" stroke-width="2" opacity="0.6"/><ellipse cx="667.1" cy="149" rx="6.9" ry="7.9" fill="url(#g9)" opacity="0.95"/><line x1="667.1" y1="140.7" x2="667.1" y2="142.4" stroke="#143c16" stroke-width="2" opacity="0.6"/><line x1="667.1" y1="155.6" x2="667.1" y2="157.3" stroke="#143c16" stroke-width="2" opacity="0.6"/><ellipse cx="683" cy="149" rx="6.9" ry="7.9" fill="url(#g10)" opacity="0.95"/><line x1="683" y1="140.7" x2="683" y2="142.4" stroke="#5c4032" stroke-width="2" opacity="0.6"/><line x1="683" y1="155.6" x2="683" y2="157.3" stroke="#5c4032" stroke-width="2" opacity="0.6"/><ellipse cx="679.1" cy="137.9" rx="6.9" ry="7.9" fill="url(#g4)" opacity="0.95"/><line x1="679.1" y1="129.6" x2="679.1" y2="131.3" stroke="#1e8c8c" stroke-width="2" opacity="0.6"/><line x1="679.1" y1="144.5" x2="679.1" y2="146.20000000000002" stroke="#1e8c8c" stroke-width="2" opacity="0.6"/><ellipse cx="697" cy="149" rx="6.9" ry="7.9" fill="url(#g11)" opacity="0.95"/><line x1="697" y1="140.7" x2="697" y2="142.4" stroke="#4a3058" stroke-width="2" opacity="0.6"/><line x1="697" y1="155.6" x2="697" y2="157.3" stroke="#4a3058" stroke-width="2" opacity="0.6"/><ellipse cx="696.5" cy="160" rx="6.9" ry="7.9" fill="url(#g12)" opacity="0.95"/><line x1="696.5" y1="151.7" x2="696.5" y2="153.4" stroke="#1e3a5c" stroke-width="2" opacity="0.6"/><line x1="696.5" y1="166.6" x2="696.5" y2="168.3" stroke="#1e3a5c" stroke-width="2" opacity="0.6"/><ellipse cx="726.7" cy="148.9" rx="6.9" ry="7.9" fill="url(#g13)" opacity="0.95"/><line x1="726.7" y1="140.6" x2="726.7" y2="142.3" stroke="#1c7a1c" stroke-width="2" opacity="0.6"/><line x1="726.7" y1="155.5" x2="726.7" y2="157.20000000000002" stroke="#1c7a1c" stroke-width="2" opacity="0.6"/><ellipse cx="768.4" cy="174.4" rx="6.9" ry="7.9" fill="url(#g14)" opacity="0.95"/><line x1="768.4" y1="166.1" x2="768.4" y2="167.8" stroke="#9a1414" stroke-width="2" opacity="0.6"/><line x1="768.4" y1="181.0" x2="768.4" y2="182.70000000000002" stroke="#9a1414" stroke-width="2" opacity="0.6"/><ellipse cx="771.3" cy="148.8" rx="6.9" ry="7.9" fill="url(#g16)" opacity="0.95"/><line x1="771.3" y1="140.5" x2="771.3" y2="142.20000000000002" stroke="#2a9496" stroke-width="2" opacity="0.6"/><line x1="771.3" y1="155.4" x2="771.3" y2="157.10000000000002" stroke="#2a9496" stroke-width="2" opacity="0.6"/><ellipse cx="766.6" cy="136.1" rx="6.9" ry="7.9" fill="url(#g15)" opacity="0.95"/><line x1="766.6" y1="127.8" x2="766.6" y2="129.5" stroke="#9a9430" stroke-width="2" opacity="0.6"/><line x1="766.6" y1="142.7" x2="766.6" y2="144.4" stroke="#9a9430" stroke-width="2" opacity="0.6"/><ellipse cx="786.9" cy="148.8" rx="6.9" ry="7.9" fill="url(#g17)" opacity="0.95"/><line x1="786.9" y1="140.5" x2="786.9" y2="142.20000000000002" stroke="#1c1ca0" stroke-width="2" opacity="0.6"/><line x1="786.9" y1="155.4" x2="786.9" y2="157.10000000000002" stroke="#1c1ca0" stroke-width="2" opacity="0.6"/><ellipse cx="792.9" cy="177.8" rx="6.9" ry="7.9" fill="url(#g18)" opacity="0.95"/><line x1="792.9" y1="169.5" x2="792.9" y2="171.20000000000002" stroke="#8a2aaa" stroke-width="2" opacity="0.6"/><line x1="792.9" y1="184.4" x2="792.9" y2="186.10000000000002" stroke="#8a2aaa" stroke-width="2" opacity="0.6"/><ellipse cx="808.9" cy="128.4" rx="6.9" ry="7.9" fill="url(#g19)" opacity="0.95"/><line x1="808.9" y1="120.10000000000001" x2="808.9" y2="121.80000000000001" stroke="#341860" stroke-width="2" opacity="0.6"/><line x1="808.9" y1="135.0" x2="808.9" y2="136.70000000000002" stroke="#341860" stroke-width="2" opacity="0.6"/><ellipse cx="856.7" cy="123.3" rx="6.9" ry="7.9" fill="url(#g20)" opacity="0.95"/><line x1="856.7" y1="115.0" x2="856.7" y2="116.7" stroke="#7a3a4a" stroke-width="2" opacity="0.6"/><line x1="856.7" y1="129.9" x2="856.7" y2="131.6" stroke="#7a3a4a" stroke-width="2" opacity="0.6"/><ellipse cx="845.1" cy="148.9" rx="6.9" ry="7.9" fill="url(#g21)" opacity="0.95"/><line x1="845.1" y1="140.6" x2="845.1" y2="142.3" stroke="#0e2a10" stroke-width="2" opacity="0.6"/><line x1="845.1" y1="155.5" x2="845.1" y2="157.20000000000002" stroke="#0e2a10" stroke-width="2" opacity="0.6"/><ellipse cx="875.1" cy="166.2" rx="6.9" ry="7.9" fill="url(#g22)" opacity="0.95"/><line x1="875.1" y1="157.89999999999998" x2="875.1" y2="159.6" stroke="#8a7a6a" stroke-width="2" opacity="0.6"/><line x1="875.1" y1="172.79999999999998" x2="875.1" y2="174.5" stroke="#8a7a6a" stroke-width="2" opacity="0.6"/><ellipse cx="875.1" cy="148.9" rx="6.9" ry="7.9" fill="url(#g23)" opacity="0.95"/><line x1="875.1" y1="140.6" x2="875.1" y2="142.3" stroke="#4a3058" stroke-width="2" opacity="0.6"/><line x1="875.1" y1="155.5" x2="875.1" y2="157.20000000000002" stroke="#4a3058" stroke-width="2" opacity="0.6"/><ellipse cx="890" cy="148.9" rx="6.9" ry="7.9" fill="url(#g24)" opacity="0.95"/><line x1="890" y1="140.6" x2="890" y2="142.3" stroke="#1a3a5a" stroke-width="2" opacity="0.6"/><line x1="890" y1="155.5" x2="890" y2="157.20000000000002" stroke="#1a3a5a" stroke-width="2" opacity="0.6"/></svg>
<div class="t" style="left:539.00px;top:144.55px;width:20px;text-align:center;font-size:8.4px;color:#b0f0a0;transform:scaleX(0.86);transform-origin:center center;">1</div>
<div class="t" style="left:548.20px;top:169.45px;width:20px;text-align:center;font-size:8.4px;color:#ffd0d0;transform:scaleX(0.86);transform-origin:center center;">2</div>
<div class="t" style="left:597.80px;top:144.95px;width:20px;text-align:center;font-size:8.4px;color:#d8d8ff;transform:scaleX(0.86);transform-origin:center center;">5</div>
<div class="t" style="left:613.10px;top:144.95px;width:20px;text-align:center;font-size:8.4px;color:#ffd8ff;transform:scaleX(0.86);transform-origin:center center;">6</div>
<div class="t" style="left:628.40px;top:144.95px;width:20px;text-align:center;font-size:8.4px;color:#e0d0ff;transform:scaleX(0.86);transform-origin:center center;">7</div>
<div class="t" style="left:642.50px;top:144.95px;width:20px;text-align:center;font-size:8.4px;color:#ffe0e0;transform:scaleX(0.86);transform-origin:center center;">8</div>
<div class="t" style="left:657.10px;top:144.95px;width:20px;text-align:center;font-size:8.4px;color:#c0ffc0;transform:scaleX(0.86);transform-origin:center center;">9</div>
<div class="t" style="left:673.00px;top:144.95px;width:20px;text-align:center;font-size:8.4px;color:#ffe8d8;transform:scaleX(0.86);transform-origin:center center;">10</div>
<div class="t" style="left:669.10px;top:133.85px;width:20px;text-align:center;font-size:8.4px;color:#d0ffff;transform:scaleX(0.86);transform-origin:center center;">4</div>
<div class="t" style="left:687.00px;top:144.95px;width:20px;text-align:center;font-size:8.4px;color:#f0e0ff;transform:scaleX(0.86);transform-origin:center center;">11</div>
<div class="t" style="left:686.50px;top:155.95px;width:20px;text-align:center;font-size:8.4px;color:#d8e8ff;transform:scaleX(0.86);transform-origin:center center;">12</div>
<div class="t" style="left:716.70px;top:144.85px;width:20px;text-align:center;font-size:8.4px;color:#c8ffc8;transform:scaleX(0.86);transform-origin:center center;">13</div>
<div class="t" style="left:758.40px;top:170.35px;width:20px;text-align:center;font-size:8.4px;color:#ffd8d8;transform:scaleX(0.86);transform-origin:center center;">14</div>
<div class="t" style="left:761.30px;top:144.75px;width:20px;text-align:center;font-size:8.4px;color:#d0ffff;transform:scaleX(0.86);transform-origin:center center;">16</div>
<div class="t" style="left:756.60px;top:132.05px;width:20px;text-align:center;font-size:8.4px;color:#f0e8a8;transform:scaleX(0.86);transform-origin:center center;">15</div>
<div class="t" style="left:776.90px;top:144.75px;width:20px;text-align:center;font-size:8.4px;color:#e0e0ff;transform:scaleX(0.86);transform-origin:center center;">17</div>
<div class="t" style="left:782.90px;top:173.75px;width:20px;text-align:center;font-size:8.4px;color:#f8e0ff;transform:scaleX(0.86);transform-origin:center center;">18</div>
<div class="t" style="left:798.90px;top:124.35px;width:20px;text-align:center;font-size:8.4px;color:#e8e0ff;transform:scaleX(0.86);transform-origin:center center;">19</div>
<div class="t" style="left:846.70px;top:119.25px;width:20px;text-align:center;font-size:8.4px;color:#ffe8e8;transform:scaleX(0.86);transform-origin:center center;">20</div>
<div class="t" style="left:835.10px;top:144.85px;width:20px;text-align:center;font-size:8.4px;color:#a8d8a8;transform:scaleX(0.86);transform-origin:center center;">21</div>
<div class="t" style="left:865.10px;top:162.15px;width:20px;text-align:center;font-size:8.4px;color:#fff4e8;transform:scaleX(0.86);transform-origin:center center;">22</div>
<div class="t" style="left:865.10px;top:144.85px;width:20px;text-align:center;font-size:8.4px;color:#f0e0ff;transform:scaleX(0.86);transform-origin:center center;">23</div>
<div class="t" style="left:880.00px;top:144.85px;width:20px;text-align:center;font-size:8.4px;color:#d8ecff;transform:scaleX(0.86);transform-origin:center center;">24</div>
<div class="t" style="left:545.50px;top:166.98px;font-size:7.5px;color:#e8e8f0;">H</div>
<div class="t" style="left:470.00px;top:101.52px;width:32px;text-align:right;font-size:6.8px;font-weight:bold;color:#d8d8e0;letter-spacing:0.3px;">12</div>
<div class="t" style="left:470.00px;top:108.92px;width:32px;text-align:right;font-size:6.8px;font-weight:bold;color:#d8d8e0;letter-spacing:0.3px;">10</div>
<div class="t" style="left:470.00px;top:116.32px;width:32px;text-align:right;font-size:6.8px;font-weight:bold;color:#d8d8e0;letter-spacing:0.3px;">8</div>
<div class="t" style="left:470.00px;top:123.72px;width:32px;text-align:right;font-size:6.8px;font-weight:bold;color:#d8d8e0;letter-spacing:0.3px;">6</div>
<div class="t" style="left:470.00px;top:131.12px;width:32px;text-align:right;font-size:6.8px;font-weight:bold;color:#d8d8e0;letter-spacing:0.3px;">4</div>
<div class="t" style="left:470.00px;top:138.52px;width:32px;text-align:right;font-size:6.8px;font-weight:bold;color:#d8d8e0;letter-spacing:0.3px;">2</div>
<div class="t" style="left:470.00px;top:145.92px;width:32px;text-align:right;font-size:6.8px;font-weight:bold;color:#d8d8e0;letter-spacing:0.3px;">0</div>
<div class="t" style="left:470.00px;top:153.32px;width:32px;text-align:right;font-size:6.8px;font-weight:bold;color:#d8d8e0;letter-spacing:0.3px;">-2</div>
<div class="t" style="left:470.00px;top:160.72px;width:32px;text-align:right;font-size:6.8px;font-weight:bold;color:#d8d8e0;letter-spacing:0.3px;">-4</div>
<div class="t" style="left:470.00px;top:168.12px;width:32px;text-align:right;font-size:6.8px;font-weight:bold;color:#d8d8e0;letter-spacing:0.3px;">-6</div>
<div class="t" style="left:470.00px;top:175.52px;width:32px;text-align:right;font-size:6.8px;font-weight:bold;color:#d8d8e0;letter-spacing:0.3px;">-8</div>
<div class="t" style="left:470.00px;top:182.92px;width:32px;text-align:right;font-size:6.8px;font-weight:bold;color:#d8d8e0;letter-spacing:0.3px;">-10</div>
<div class="t" style="left:470.00px;top:190.32px;width:32px;text-align:right;font-size:6.8px;font-weight:bold;color:#d8d8e0;letter-spacing:0.3px;">-12</div>
<div class="t" style="left:518.30px;top:202.56px;width:30px;text-align:right;font-size:6.3px;font-weight:bold;color:#d8d8e0;">20</div>
<div class="t" style="left:544.45px;top:202.56px;width:30px;text-align:right;font-size:6.3px;font-weight:bold;color:#d8d8e0;">30</div>
<div class="t" style="left:577.40px;top:202.56px;width:30px;text-align:right;font-size:6.3px;font-weight:bold;color:#d8d8e0;">50</div>
<div class="t" style="left:622.10px;top:202.56px;width:30px;text-align:right;font-size:6.3px;font-weight:bold;color:#d8d8e0;">100</div>
<div class="t" style="left:666.80px;top:202.56px;width:30px;text-align:right;font-size:6.3px;font-weight:bold;color:#d8d8e0;">200</div>
<div class="t" style="left:692.95px;top:202.56px;width:30px;text-align:right;font-size:6.3px;font-weight:bold;color:#d8d8e0;">300</div>
<div class="t" style="left:725.90px;top:202.56px;width:30px;text-align:right;font-size:6.3px;font-weight:bold;color:#d8d8e0;">500</div>
<div class="t" style="left:770.60px;top:202.56px;width:30px;text-align:right;font-size:6.3px;font-weight:bold;color:#d8d8e0;">1k</div>
<div class="t" style="left:815.30px;top:202.56px;width:30px;text-align:right;font-size:6.3px;font-weight:bold;color:#d8d8e0;">2k</div>
<div class="t" style="left:841.45px;top:202.56px;width:30px;text-align:right;font-size:6.3px;font-weight:bold;color:#d8d8e0;">3k</div>
<div class="t" style="left:874.40px;top:202.56px;width:30px;text-align:right;font-size:6.3px;font-weight:bold;color:#d8d8e0;">5k</div>
<div class="a" style="left:485px;top:211.2px;width:420px;height:46px;background:#000"></div>
<svg class="a" style="left:512px;top:224px" width="14" height="22"><path d="M11,2 L3,10.5 L11,19" fill="none" stroke="#d8d8d8" stroke-width="1.1"/></svg>
<div class="a" style="left:528.2px;top:213px;width:38px;height:28.7px;background:linear-gradient(#a0a0a0,#8a8a8a 50%,#6e6e6e);border-radius:2px"></div>
<div class="t" style="left:528.20px;top:221.55px;width:37.8px;text-align:center;font-size:8.2px;color:#ececec;transform:scaleX(0.88);transform-origin:center center;">2000</div>
<div class="t" style="left:528.20px;top:229.95px;width:37.8px;text-align:center;font-size:8.2px;color:#ececec;transform:scaleX(0.88);transform-origin:center center;">0.0</div>
<div class="t" style="left:528.20px;top:245.45px;width:37.8px;text-align:center;font-size:8.2px;color:#f0f0f0;transform:scaleX(0.9);transform-origin:center center;">21</div>
<div class="a" style="left:569.1px;top:213px;width:38px;height:28.7px;background:linear-gradient(#a0a0a0,#8a8a8a 50%,#6e6e6e);border-radius:2px"></div>
<div class="t" style="left:569.10px;top:221.55px;width:37.8px;text-align:center;font-size:8.2px;color:#ececec;transform:scaleX(0.88);transform-origin:center center;">3177</div>
<div class="t" style="left:569.10px;top:229.95px;width:37.8px;text-align:center;font-size:8.2px;color:#ececec;transform:scaleX(0.88);transform-origin:center center;">-4.7</div>
<div class="t" style="left:569.10px;top:245.45px;width:37.8px;text-align:center;font-size:8.2px;color:#f0f0f0;transform:scaleX(0.9);transform-origin:center center;">22</div>
<div class="a" style="left:610.0px;top:213px;width:38px;height:28.7px;background:linear-gradient(#a0a0a0,#8a8a8a 50%,#6e6e6e);border-radius:2px"></div>
<div class="t" style="left:610.00px;top:221.55px;width:37.8px;text-align:center;font-size:8.2px;color:#ececec;transform:scaleX(0.88);transform-origin:center center;">3150</div>
<div class="t" style="left:610.00px;top:229.95px;width:37.8px;text-align:center;font-size:8.2px;color:#ececec;transform:scaleX(0.88);transform-origin:center center;">0.0</div>
<div class="t" style="left:610.00px;top:245.45px;width:37.8px;text-align:center;font-size:8.2px;color:#f0f0f0;transform:scaleX(0.9);transform-origin:center center;">23</div>
<div class="a" style="left:650.9px;top:213px;width:38px;height:28.7px;background:linear-gradient(#a0a0a0,#8a8a8a 50%,#6e6e6e);border-radius:2px"></div>
<div class="t" style="left:650.90px;top:221.55px;width:37.8px;text-align:center;font-size:8.2px;color:#ececec;transform:scaleX(0.88);transform-origin:center center;">4000</div>
<div class="t" style="left:650.90px;top:229.95px;width:37.8px;text-align:center;font-size:8.2px;color:#ececec;transform:scaleX(0.88);transform-origin:center center;">0.0</div>
<div class="t" style="left:650.90px;top:245.45px;width:37.8px;text-align:center;font-size:8.2px;color:#f0f0f0;transform:scaleX(0.9);transform-origin:center center;">24</div>
<div class="a" style="left:691.8px;top:213px;width:38px;height:28.7px;background:linear-gradient(#a0a0a0,#8a8a8a 50%,#6e6e6e);border-radius:2px"></div>
<div class="t" style="left:691.80px;top:221.55px;width:37.8px;text-align:center;font-size:8.2px;color:#ececec;transform:scaleX(0.88);transform-origin:center center;">5197</div>
<div class="t" style="left:691.80px;top:229.95px;width:37.8px;text-align:center;font-size:8.2px;color:#ececec;transform:scaleX(0.88);transform-origin:center center;">5.5</div>
<div class="t" style="left:691.80px;top:245.45px;width:37.8px;text-align:center;font-size:8.2px;color:#f0f0f0;transform:scaleX(0.9);transform-origin:center center;">25</div>
<div class="a" style="left:732.7px;top:213px;width:38px;height:28.7px;background:linear-gradient(#a0a0a0,#8a8a8a 50%,#6e6e6e);border-radius:2px"></div>
<div class="t" style="left:732.70px;top:221.55px;width:37.8px;text-align:center;font-size:8.2px;color:#ececec;transform:scaleX(0.88);transform-origin:center center;">6300</div>
<div class="t" style="left:732.70px;top:229.95px;width:37.8px;text-align:center;font-size:8.2px;color:#ececec;transform:scaleX(0.88);transform-origin:center center;">0.0</div>
<div class="t" style="left:732.70px;top:245.45px;width:37.8px;text-align:center;font-size:8.2px;color:#f0f0f0;transform:scaleX(0.9);transform-origin:center center;">26</div>
<div class="a" style="left:773.6px;top:213px;width:38px;height:28.7px;background:linear-gradient(#e8eef4,#d8e2ec);border-radius:2px"></div>
<div class="t" style="left:773.60px;top:221.55px;width:37.8px;text-align:center;font-size:8.2px;color:#2a2a30;transform:scaleX(0.88);transform-origin:center center;">10762</div>
<div class="t" style="left:773.60px;top:229.95px;width:37.8px;text-align:center;font-size:8.2px;color:#2a2a30;transform:scaleX(0.88);transform-origin:center center;">3.5</div>
<div class="t" style="left:773.60px;top:245.45px;width:37.8px;text-align:center;font-size:8.2px;color:#f0f0f0;transform:scaleX(0.9);transform-origin:center center;">27</div>
<div class="a" style="left:814.5px;top:213px;width:38px;height:28.7px;background:linear-gradient(#a0a0a0,#8a8a8a 50%,#6e6e6e);border-radius:2px"></div>
<div class="t" style="left:814.50px;top:221.55px;width:37.8px;text-align:center;font-size:8.2px;color:#ececec;transform:scaleX(0.88);transform-origin:center center;">7994</div>
<div class="t" style="left:814.50px;top:229.95px;width:37.8px;text-align:center;font-size:8.2px;color:#ececec;transform:scaleX(0.88);transform-origin:center center;">-5.9</div>
<div class="t" style="left:814.50px;top:245.45px;width:37.8px;text-align:center;font-size:8.2px;color:#f0f0f0;transform:scaleX(0.9);transform-origin:center center;">28</div>
<div class="a" style="left:855.4px;top:213px;width:38px;height:28.7px;background:linear-gradient(#a0a0a0,#8a8a8a 50%,#6e6e6e);border-radius:2px"></div>
<div class="t" style="left:855.40px;top:221.55px;width:37.8px;text-align:center;font-size:8.2px;color:#ececec;transform:scaleX(0.88);transform-origin:center center;">14340</div>
<div class="t" style="left:855.40px;top:229.95px;width:37.8px;text-align:center;font-size:8.2px;color:#ececec;transform:scaleX(0.88);transform-origin:center center;">4.2</div>
<div class="t" style="left:855.40px;top:245.45px;width:37.8px;text-align:center;font-size:8.2px;color:#f0f0f0;transform:scaleX(0.9);transform-origin:center center;">29</div>
<div class="a" style="left:896.3px;top:213px;width:38px;height:28.7px;background:linear-gradient(#a0a0a0,#8a8a8a 50%,#6e6e6e);border-radius:2px"></div>
<div class="t" style="left:896.30px;top:221.55px;width:37.8px;text-align:center;font-size:8.2px;color:#ececec;transform:scaleX(0.88);transform-origin:center center;"></div>
<div class="t" style="left:896.30px;top:229.95px;width:37.8px;text-align:center;font-size:8.2px;color:#ececec;transform:scaleX(0.88);transform-origin:center center;"></div>
<div class="t" style="left:896.30px;top:245.45px;width:37.8px;text-align:center;font-size:8.2px;color:#f0f0f0;transform:scaleX(0.9);transform-origin:center center;">30</div>
<div class="t" style="left:519.50px;top:266.66px;width:50px;text-align:center;font-size:11.5px;font-weight:bold;color:#f0f0f0;">EQ 27</div>
<div class="a" style="left:498.3px;top:286.3px;width:92.5px;height:14px;background:#36ee8e;border-radius:1.5px"></div>
<div class="t" style="left:498.30px;top:289.69px;width:92.5px;text-align:center;font-size:7.5px;font-weight:bold;color:#12502c;">ON</div>
<div class="t" style="left:620.30px;top:274.88px;width:60px;text-align:center;font-size:7.5px;color:#e0e0e4;">Type</div>
<div class="t" style="left:725.50px;top:274.88px;width:60px;text-align:center;font-size:7.5px;color:#e0e0e4;">Freq(Hz)</div>
<div class="t" style="left:831.00px;top:274.88px;width:60px;text-align:center;font-size:7.5px;color:#e0e0e4;">Q</div>
<div class="a" style="left:617px;top:285.1px;width:66.8px;height:15.6px;background:linear-gradient(#262626,#050505);border:1.7px solid #b0b0b0;border-radius:2.5px"></div>
<div class="t" style="left:617.50px;top:289.38px;width:65.5px;text-align:center;font-size:7.5px;color:#f0f0f0;">PEQ</div>
<svg class="a" style="left:674px;top:290px" width="8" height="7"><path d="M0.5,1.5 L6.5,1.5 L3.5,5.5 Z" fill="#f0f0f0"/></svg>
<div class="a" style="left:722.2px;top:285.7px;width:66.7px;height:15px;background:#1d1d1a;border:1.5px solid #9c9c9c;border-radius:2px"></div>
<div class="t" style="left:722.20px;top:289.58px;width:66.7px;text-align:center;font-size:7.5px;color:#f0f0f0;">10762</div>
<div class="a" style="left:828.2px;top:285.7px;width:66.7px;height:15px;background:#1d1d1a;border:1.5px solid #9c9c9c;border-radius:2px"></div>
<div class="t" style="left:828.20px;top:289.58px;width:66.7px;text-align:center;font-size:7.5px;color:#f0f0f0;">1.0</div>
<div class="a" style="left:172px;top:321px;width:728px;height:127px;background:#2b2930"></div>
<div class="a" style="left:172px;top:310px;width:728px;height:10.7px;background:#f0f3f8"></div>
<div class="a" style="left:172px;top:310px;width:149px;height:10.7px;background:#fbfcfd;border-right:1px solid #c8ccd2"></div>
<div class="a" style="left:182px;top:310px;width:1px;height:10.7px;background:#c8ccd2"></div>
<svg class="a" style="left:173px;top:311px" width="9" height="10"><path d="M6,2 L2.5,5 L6,8 Z" fill="#8a8e94"/></svg>
<div class="t" style="left:241px;width:20px;top:312.5px;text-align:center;font-size:6px;color:#9aa0a8;letter-spacing:-0.5px">|||</div>
<svg class="a" style="left:896.5px;top:310.5px" width="6" height="10"><path d="M1,2 L4.5,5 L1,8 Z" fill="#9a9ea4"/></svg>
<div class="a" style="left:175.0px;top:335px;width:36px;height:113px;background:#36343b"></div>
<div class="a" style="left:175.0px;top:323.5px;width:36px;height:11.6px;background:#0ccb72;border-radius:5px 5px 0 0"></div>
<div class="t" style="left:175.50px;top:326.74px;width:36px;text-align:center;font-size:8px;color:#e8fff2;transform:scaleX(0.92);transform-origin:center center;letter-spacing:0.2px;">IN A</div>
<div class="a" style="left:174.0px;top:322.5px;width:38px;height:130px;border:1.2px solid #1a9c60;border-radius:6px"></div>
<div class="a" style="left:176.5px;top:341px;width:33px;height:13px;background:#000;border:1.3px solid #c6c6c6"></div>
<div class="t" style="left:176.50px;top:343.60px;width:33px;text-align:center;font-size:8.3px;color:#d2d2c6;transform:scaleX(0.85);transform-origin:center center;">0.0</div>
<svg class="a" style="left:185.6px;top:357px" width="14.3" height="92"><rect x="1.5" y="1.5" width="11.3" height="89" fill="none" stroke="#b4b4bc" stroke-width="1.1"/><line x1="1.5" y1="11.5" x2="12.8" y2="11.5" stroke="#e4e4e8" stroke-width="1.3"/><line x1="3.2" y1="16.0" x2="12.100000000000001" y2="16.0" stroke="#c8c8d0" stroke-width="1.1"/><line x1="3.2" y1="20.4" x2="12.100000000000001" y2="20.4" stroke="#c8c8d0" stroke-width="1.1"/><line x1="1.5" y1="24.9" x2="12.8" y2="24.9" stroke="#e4e4e8" stroke-width="1.3"/><line x1="3.2" y1="29.4" x2="12.100000000000001" y2="29.4" stroke="#c8c8d0" stroke-width="1.1"/><line x1="3.2" y1="33.8" x2="12.100000000000001" y2="33.8" stroke="#c8c8d0" stroke-width="1.1"/><line x1="3.2" y1="38.3" x2="12.100000000000001" y2="38.3" stroke="#c8c8d0" stroke-width="1.1"/><line x1="3.2" y1="42.8" x2="12.100000000000001" y2="42.8" stroke="#c8c8d0" stroke-width="1.1"/><line x1="3.2" y1="47.3" x2="12.100000000000001" y2="47.3" stroke="#c8c8d0" stroke-width="1.1"/><line x1="3.2" y1="51.7" x2="12.100000000000001" y2="51.7" stroke="#c8c8d0" stroke-width="1.1"/><line x1="3.2" y1="56.2" x2="12.100000000000001" y2="56.2" stroke="#c8c8d0" stroke-width="1.1"/><line x1="3.2" y1="60.7" x2="12.100000000000001" y2="60.7" stroke="#c8c8d0" stroke-width="1.1"/><line x1="3.2" y1="65.1" x2="12.100000000000001" y2="65.1" stroke="#c8c8d0" stroke-width="1.1"/><line x1="3.2" y1="69.6" x2="12.100000000000001" y2="69.6" stroke="#c8c8d0" stroke-width="1.1"/><line x1="3.2" y1="74.1" x2="12.100000000000001" y2="74.1" stroke="#c8c8d0" stroke-width="1.1"/><line x1="1.5" y1="78.5" x2="12.8" y2="78.5" stroke="#e4e4e8" stroke-width="1.3"/></svg>
<div class="t" style="left:186.60px;top:360.12px;width:12.3px;text-align:center;font-size:6.8px;font-weight:bold;color:#f0f0f0;">6</div>
<div class="t" style="left:185.60px;top:438.02px;width:14.3px;text-align:center;font-size:6.8px;font-weight:bold;color:#f0f0f0;transform:scaleX(0.85);transform-origin:center center;">-64</div>
<div class="a" style="left:204.4px;top:366.7px;width:1.6px;height:71px;background:#e4e4e4"></div>
<div class="a" style="left:200.7px;top:371.8px;width:9px;height:13.3px;background:linear-gradient(#f08018 0,#f08018 2.6px,#fbe0c0 2.6px,#fbe0c0 5.2px,#f07010 5.2px,#f07010 8.2px,#fbe0c0 8.2px,#fbe0c0 10.8px,#f08018 10.8px);border-radius:2px"></div>
<div class="a" style="left:176.8px;top:380.0px;width:9.6px;height:8.8px;background:#3e3c43;border:1px solid #96949c;border-radius:1.5px"></div>
<div class="t" style="left:176.80px;top:380.88px;width:9.6px;text-align:center;font-size:7.3px;font-weight:bold;color:#f0f0f0;">M</div>
<div class="a" style="left:176.8px;top:390.4px;width:9.6px;height:8.8px;background:#3e3c43;border:1px solid #96949c;border-radius:1.5px"></div>
<div class="t" style="left:176.80px;top:391.72px;width:9.6px;text-align:center;font-size:6.5px;font-weight:bold;color:#f0f0f0;">+</div>
<div class="a" style="left:176.8px;top:400.9px;width:9.6px;height:8.8px;background:#f27a12;border:1px solid #f27a12;border-radius:1.5px"></div>
<div class="t" style="left:176.80px;top:401.78px;width:9.6px;text-align:center;font-size:7.3px;font-weight:bold;color:#8a3c00;">N</div>
<div class="a" style="left:176.8px;top:411.4px;width:9.6px;height:8.8px;background:#f27a12;border:1px solid #f27a12;border-radius:1.5px"></div>
<div class="t" style="left:176.80px;top:412.23px;width:9.6px;text-align:center;font-size:7.3px;font-weight:bold;color:#8a3c00;">E</div>
<div class="a" style="left:176.8px;top:421.8px;width:9.6px;height:8.8px;background:#3e3c43;border:1px solid #96949c;border-radius:1.5px"></div>
<div class="t" style="left:176.80px;top:422.68px;width:9.6px;text-align:center;font-size:7.3px;font-weight:bold;color:#f0f0f0;">D</div>
<div class="a" style="left:217.9px;top:335px;width:36px;height:113px;background:#36343b"></div>
<div class="a" style="left:217.9px;top:323.5px;width:36px;height:11.6px;background:#0ccb72;border-radius:5px 5px 0 0"></div>
<div class="t" style="left:218.40px;top:326.74px;width:36px;text-align:center;font-size:8px;color:#e8fff2;transform:scaleX(0.92);transform-origin:center center;letter-spacing:0.2px;">IN B</div>
<div class="a" style="left:219.4px;top:341px;width:33px;height:13px;background:#000;border:1.3px solid #c6c6c6"></div>
<div class="t" style="left:219.40px;top:343.60px;width:33px;text-align:center;font-size:8.3px;color:#d2d2c6;transform:scaleX(0.85);transform-origin:center center;">0.0</div>
<svg class="a" style="left:228.5px;top:357px" width="14.3" height="92"><rect x="1.5" y="1.5" width="11.3" height="89" fill="none" stroke="#b4b4bc" stroke-width="1.1"/><line x1="1.5" y1="11.5" x2="12.8" y2="11.5" stroke="#e4e4e8" stroke-width="1.3"/><line x1="3.2" y1="16.0" x2="12.100000000000001" y2="16.0" stroke="#c8c8d0" stroke-width="1.1"/><line x1="3.2" y1="20.4" x2="12.100000000000001" y2="20.4" stroke="#c8c8d0" stroke-width="1.1"/><line x1="1.5" y1="24.9" x2="12.8" y2="24.9" stroke="#e4e4e8" stroke-width="1.3"/><line x1="3.2" y1="29.4" x2="12.100000000000001" y2="29.4" stroke="#c8c8d0" stroke-width="1.1"/><line x1="3.2" y1="33.8" x2="12.100000000000001" y2="33.8" stroke="#c8c8d0" stroke-width="1.1"/><line x1="3.2" y1="38.3" x2="12.100000000000001" y2="38.3" stroke="#c8c8d0" stroke-width="1.1"/><line x1="3.2" y1="42.8" x2="12.100000000000001" y2="42.8" stroke="#c8c8d0" stroke-width="1.1"/><line x1="3.2" y1="47.3" x2="12.100000000000001" y2="47.3" stroke="#c8c8d0" stroke-width="1.1"/><line x1="3.2" y1="51.7" x2="12.100000000000001" y2="51.7" stroke="#c8c8d0" stroke-width="1.1"/><line x1="3.2" y1="56.2" x2="12.100000000000001" y2="56.2" stroke="#c8c8d0" stroke-width="1.1"/><line x1="3.2" y1="60.7" x2="12.100000000000001" y2="60.7" stroke="#c8c8d0" stroke-width="1.1"/><line x1="3.2" y1="65.1" x2="12.100000000000001" y2="65.1" stroke="#c8c8d0" stroke-width="1.1"/><line x1="3.2" y1="69.6" x2="12.100000000000001" y2="69.6" stroke="#c8c8d0" stroke-width="1.1"/><line x1="3.2" y1="74.1" x2="12.100000000000001" y2="74.1" stroke="#c8c8d0" stroke-width="1.1"/><line x1="1.5" y1="78.5" x2="12.8" y2="78.5" stroke="#e4e4e8" stroke-width="1.3"/></svg>
<div class="t" style="left:229.50px;top:360.12px;width:12.3px;text-align:center;font-size:6.8px;font-weight:bold;color:#f0f0f0;">6</div>
<div class="t" style="left:228.50px;top:438.02px;width:14.3px;text-align:center;font-size:6.8px;font-weight:bold;color:#f0f0f0;transform:scaleX(0.85);transform-origin:center center;">-64</div>
<div class="a" style="left:247.3px;top:366.7px;width:1.6px;height:71px;background:#e4e4e4"></div>
<div class="a" style="left:243.6px;top:371.8px;width:9px;height:13.3px;background:linear-gradient(#f08018 0,#f08018 2.6px,#fbe0c0 2.6px,#fbe0c0 5.2px,#f07010 5.2px,#f07010 8.2px,#fbe0c0 8.2px,#fbe0c0 10.8px,#f08018 10.8px);border-radius:2px"></div>
<div class="a" style="left:219.7px;top:380.0px;width:9.6px;height:8.8px;background:#3e3c43;border:1px solid #96949c;border-radius:1.5px"></div>
<div class="t" style="left:219.70px;top:380.88px;width:9.6px;text-align:center;font-size:7.3px;font-weight:bold;color:#f0f0f0;">M</div>
<div class="a" style="left:219.7px;top:390.4px;width:9.6px;height:8.8px;background:#3e3c43;border:1px solid #96949c;border-radius:1.5px"></div>
<div class="t" style="left:219.70px;top:391.72px;width:9.6px;text-align:center;font-size:6.5px;font-weight:bold;color:#f0f0f0;">+</div>
<div class="a" style="left:219.7px;top:400.9px;width:9.6px;height:8.8px;background:#3e3c43;border:1px solid #96949c;border-radius:1.5px"></div>
<div class="t" style="left:219.70px;top:401.78px;width:9.6px;text-align:center;font-size:7.3px;font-weight:bold;color:#f0f0f0;">N</div>
<div class="a" style="left:219.7px;top:411.4px;width:9.6px;height:8.8px;background:#3e3c43;border:1px solid #96949c;border-radius:1.5px"></div>
<div class="t" style="left:219.70px;top:412.23px;width:9.6px;text-align:center;font-size:7.3px;font-weight:bold;color:#f0f0f0;">E</div>
<div class="a" style="left:219.7px;top:421.8px;width:9.6px;height:8.8px;background:#3e3c43;border:1px solid #96949c;border-radius:1.5px"></div>
<div class="t" style="left:219.70px;top:422.68px;width:9.6px;text-align:center;font-size:7.3px;font-weight:bold;color:#f0f0f0;">D</div>
<div class="a" style="left:260.8px;top:335px;width:36px;height:113px;background:#36343b"></div>
<div class="a" style="left:260.8px;top:323.5px;width:36px;height:11.6px;background:#0ccb72;border-radius:5px 5px 0 0"></div>
<div class="t" style="left:261.30px;top:326.74px;width:36px;text-align:center;font-size:8px;color:#e8fff2;transform:scaleX(0.92);transform-origin:center center;letter-spacing:0.2px;">IN C</div>
<div class="a" style="left:262.3px;top:341px;width:33px;height:13px;background:#000;border:1.3px solid #c6c6c6"></div>
<div class="t" style="left:262.30px;top:343.60px;width:33px;text-align:center;font-size:8.3px;color:#d2d2c6;transform:scaleX(0.85);transform-origin:center center;">0.0</div>
<svg class="a" style="left:271.40000000000003px;top:357px" width="14.3" height="92"><rect x="1.5" y="1.5" width="11.3" height="89" fill="none" stroke="#b4b4bc" stroke-width="1.1"/><line x1="1.5" y1="11.5" x2="12.8" y2="11.5" stroke="#e4e4e8" stroke-width="1.3"/><line x1="3.2" y1="16.0" x2="12.100000000000001" y2="16.0" stroke="#c8c8d0" stroke-width="1.1"/><line x1="3.2" y1="20.4" x2="12.100000000000001" y2="20.4" stroke="#c8c8d0" stroke-width="1.1"/><line x1="1.5" y1="24.9" x2="12.8" y2="24.9" stroke="#e4e4e8" stroke-width="1.3"/><line x1="3.2" y1="29.4" x2="12.100000000000001" y2="29.4" stroke="#c8c8d0" stroke-width="1.1"/><line x1="3.2" y1="33.8" x2="12.100000000000001" y2="33.8" stroke="#c8c8d0" stroke-width="1.1"/><line x1="3.2" y1="38.3" x2="12.100000000000001" y2="38.3" stroke="#c8c8d0" stroke-width="1.1"/><line x1="3.2" y1="42.8" x2="12.100000000000001" y2="42.8" stroke="#c8c8d0" stroke-width="1.1"/><line x1="3.2" y1="47.3" x2="12.100000000000001" y2="47.3" stroke="#c8c8d0" stroke-width="1.1"/><line x1="3.2" y1="51.7" x2="12.100000000000001" y2="51.7" stroke="#c8c8d0" stroke-width="1.1"/><line x1="3.2" y1="56.2" x2="12.100000000000001" y2="56.2" stroke="#c8c8d0" stroke-width="1.1"/><line x1="3.2" y1="60.7" x2="12.100000000000001" y2="60.7" stroke="#c8c8d0" stroke-width="1.1"/><line x1="3.2" y1="65.1" x2="12.100000000000001" y2="65.1" stroke="#c8c8d0" stroke-width="1.1"/><line x1="3.2" y1="69.6" x2="12.100000000000001" y2="69.6" stroke="#c8c8d0" stroke-width="1.1"/><line x1="3.2" y1="74.1" x2="12.100000000000001" y2="74.1" stroke="#c8c8d0" stroke-width="1.1"/><line x1="1.5" y1="78.5" x2="12.8" y2="78.5" stroke="#e4e4e8" stroke-width="1.3"/></svg>
<div class="t" style="left:272.40px;top:360.12px;width:12.3px;text-align:center;font-size:6.8px;font-weight:bold;color:#f0f0f0;">6</div>
<div class="t" style="left:271.40px;top:438.02px;width:14.3px;text-align:center;font-size:6.8px;font-weight:bold;color:#f0f0f0;transform:scaleX(0.85);transform-origin:center center;">-64</div>
<div class="a" style="left:290.2px;top:366.7px;width:1.6px;height:71px;background:#e4e4e4"></div>
<div class="a" style="left:286.5px;top:371.8px;width:9px;height:13.3px;background:linear-gradient(#f08018 0,#f08018 2.6px,#fbe0c0 2.6px,#fbe0c0 5.2px,#f07010 5.2px,#f07010 8.2px,#fbe0c0 8.2px,#fbe0c0 10.8px,#f08018 10.8px);border-radius:2px"></div>
<div class="a" style="left:262.6px;top:380.0px;width:9.6px;height:8.8px;background:#3e3c43;border:1px solid #96949c;border-radius:1.5px"></div>
<div class="t" style="left:262.60px;top:380.88px;width:9.6px;text-align:center;font-size:7.3px;font-weight:bold;color:#f0f0f0;">M</div>
<div class="a" style="left:262.6px;top:390.4px;width:9.6px;height:8.8px;background:#3e3c43;border:1px solid #96949c;border-radius:1.5px"></div>
<div class="t" style="left:262.60px;top:391.72px;width:9.6px;text-align:center;font-size:6.5px;font-weight:bold;color:#f0f0f0;">+</div>
<div class="a" style="left:262.6px;top:400.9px;width:9.6px;height:8.8px;background:#3e3c43;border:1px solid #96949c;border-radius:1.5px"></div>
<div class="t" style="left:262.60px;top:401.78px;width:9.6px;text-align:center;font-size:7.3px;font-weight:bold;color:#f0f0f0;">N</div>
<div class="a" style="left:262.6px;top:411.4px;width:9.6px;height:8.8px;background:#3e3c43;border:1px solid #96949c;border-radius:1.5px"></div>
<div class="t" style="left:262.60px;top:412.23px;width:9.6px;text-align:center;font-size:7.3px;font-weight:bold;color:#f0f0f0;">E</div>
<div class="a" style="left:262.6px;top:421.8px;width:9.6px;height:8.8px;background:#3e3c43;border:1px solid #96949c;border-radius:1.5px"></div>
<div class="t" style="left:262.60px;top:422.68px;width:9.6px;text-align:center;font-size:7.3px;font-weight:bold;color:#f0f0f0;">D</div>
<div class="a" style="left:303.7px;top:335px;width:36px;height:113px;background:#36343b"></div>
<div class="a" style="left:303.7px;top:323.5px;width:36px;height:11.6px;background:#0ccb72;border-radius:5px 5px 0 0"></div>
<div class="t" style="left:304.20px;top:326.74px;width:36px;text-align:center;font-size:8px;color:#e8fff2;transform:scaleX(0.92);transform-origin:center center;letter-spacing:0.2px;">IN D</div>
<div class="a" style="left:305.2px;top:341px;width:33px;height:13px;background:#000;border:1.3px solid #c6c6c6"></div>
<div class="t" style="left:305.20px;top:343.60px;width:33px;text-align:center;font-size:8.3px;color:#d2d2c6;transform:scaleX(0.85);transform-origin:center center;">0.0</div>
<svg class="a" style="left:314.3px;top:357px" width="14.3" height="92"><rect x="1.5" y="1.5" width="11.3" height="89" fill="none" stroke="#b4b4bc" stroke-width="1.1"/><line x1="1.5" y1="11.5" x2="12.8" y2="11.5" stroke="#e4e4e8" stroke-width="1.3"/><line x1="3.2" y1="16.0" x2="12.100000000000001" y2="16.0" stroke="#c8c8d0" stroke-width="1.1"/><line x1="3.2" y1="20.4" x2="12.100000000000001" y2="20.4" stroke="#c8c8d0" stroke-width="1.1"/><line x1="1.5" y1="24.9" x2="12.8" y2="24.9" stroke="#e4e4e8" stroke-width="1.3"/><line x1="3.2" y1="29.4" x2="12.100000000000001" y2="29.4" stroke="#c8c8d0" stroke-width="1.1"/><line x1="3.2" y1="33.8" x2="12.100000000000001" y2="33.8" stroke="#c8c8d0" stroke-width="1.1"/><line x1="3.2" y1="38.3" x2="12.100000000000001" y2="38.3" stroke="#c8c8d0" stroke-width="1.1"/><line x1="3.2" y1="42.8" x2="12.100000000000001" y2="42.8" stroke="#c8c8d0" stroke-width="1.1"/><line x1="3.2" y1="47.3" x2="12.100000000000001" y2="47.3" stroke="#c8c8d0" stroke-width="1.1"/><line x1="3.2" y1="51.7" x2="12.100000000000001" y2="51.7" stroke="#c8c8d0" stroke-width="1.1"/><line x1="3.2" y1="56.2" x2="12.100000000000001" y2="56.2" stroke="#c8c8d0" stroke-width="1.1"/><line x1="3.2" y1="60.7" x2="12.100000000000001" y2="60.7" stroke="#c8c8d0" stroke-width="1.1"/><line x1="3.2" y1="65.1" x2="12.100000000000001" y2="65.1" stroke="#c8c8d0" stroke-width="1.1"/><line x1="3.2" y1="69.6" x2="12.100000000000001" y2="69.6" stroke="#c8c8d0" stroke-width="1.1"/><line x1="3.2" y1="74.1" x2="12.100000000000001" y2="74.1" stroke="#c8c8d0" stroke-width="1.1"/><line x1="1.5" y1="78.5" x2="12.8" y2="78.5" stroke="#e4e4e8" stroke-width="1.3"/></svg>
<div class="t" style="left:315.30px;top:360.12px;width:12.3px;text-align:center;font-size:6.8px;font-weight:bold;color:#f0f0f0;">6</div>
<div class="t" style="left:314.30px;top:438.02px;width:14.3px;text-align:center;font-size:6.8px;font-weight:bold;color:#f0f0f0;transform:scaleX(0.85);transform-origin:center center;">-64</div>
<div class="a" style="left:333.09999999999997px;top:366.7px;width:1.6px;height:71px;background:#e4e4e4"></div>
<div class="a" style="left:329.4px;top:371.8px;width:9px;height:13.3px;background:linear-gradient(#f08018 0,#f08018 2.6px,#fbe0c0 2.6px,#fbe0c0 5.2px,#f07010 5.2px,#f07010 8.2px,#fbe0c0 8.2px,#fbe0c0 10.8px,#f08018 10.8px);border-radius:2px"></div>
<div class="a" style="left:305.5px;top:380.0px;width:9.6px;height:8.8px;background:#3e3c43;border:1px solid #96949c;border-radius:1.5px"></div>
<div class="t" style="left:305.50px;top:380.88px;width:9.6px;text-align:center;font-size:7.3px;font-weight:bold;color:#f0f0f0;">M</div>
<div class="a" style="left:305.5px;top:390.4px;width:9.6px;height:8.8px;background:#3e3c43;border:1px solid #96949c;border-radius:1.5px"></div>
<div class="t" style="left:305.50px;top:391.72px;width:9.6px;text-align:center;font-size:6.5px;font-weight:bold;color:#f0f0f0;">+</div>
<div class="a" style="left:305.5px;top:400.9px;width:9.6px;height:8.8px;background:#3e3c43;border:1px solid #96949c;border-radius:1.5px"></div>
<div class="t" style="left:305.50px;top:401.78px;width:9.6px;text-align:center;font-size:7.3px;font-weight:bold;color:#f0f0f0;">N</div>
<div class="a" style="left:305.5px;top:411.4px;width:9.6px;height:8.8px;background:#3e3c43;border:1px solid #96949c;border-radius:1.5px"></div>
<div class="t" style="left:305.50px;top:412.23px;width:9.6px;text-align:center;font-size:7.3px;font-weight:bold;color:#f0f0f0;">E</div>
<div class="a" style="left:305.5px;top:421.8px;width:9.6px;height:8.8px;background:#3e3c43;border:1px solid #96949c;border-radius:1.5px"></div>
<div class="t" style="left:305.50px;top:422.68px;width:9.6px;text-align:center;font-size:7.3px;font-weight:bold;color:#f0f0f0;">D</div>
<div class="a" style="left:346.6px;top:335px;width:36px;height:113px;background:#36343b"></div>
<div class="a" style="left:346.6px;top:323.5px;width:36px;height:11.6px;background:#0ccb72;border-radius:5px 5px 0 0"></div>
<div class="t" style="left:347.10px;top:326.74px;width:36px;text-align:center;font-size:8px;color:#e8fff2;transform:scaleX(0.92);transform-origin:center center;letter-spacing:0.2px;">IN E</div>
<div class="a" style="left:348.1px;top:341px;width:33px;height:13px;background:#000;border:1.3px solid #c6c6c6"></div>
<div class="t" style="left:348.10px;top:343.60px;width:33px;text-align:center;font-size:8.3px;color:#d2d2c6;transform:scaleX(0.85);transform-origin:center center;">0.0</div>
<svg class="a" style="left:357.20000000000005px;top:357px" width="14.3" height="92"><rect x="1.5" y="1.5" width="11.3" height="89" fill="none" stroke="#b4b4bc" stroke-width="1.1"/><line x1="1.5" y1="11.5" x2="12.8" y2="11.5" stroke="#e4e4e8" stroke-width="1.3"/><line x1="3.2" y1="16.0" x2="12.100000000000001" y2="16.0" stroke="#c8c8d0" stroke-width="1.1"/><line x1="3.2" y1="20.4" x2="12.100000000000001" y2="20.4" stroke="#c8c8d0" stroke-width="1.1"/><line x1="1.5" y1="24.9" x2="12.8" y2="24.9" stroke="#e4e4e8" stroke-width="1.3"/><line x1="3.2" y1="29.4" x2="12.100000000000001" y2="29.4" stroke="#c8c8d0" stroke-width="1.1"/><line x1="3.2" y1="33.8" x2="12.100000000000001" y2="33.8" stroke="#c8c8d0" stroke-width="1.1"/><line x1="3.2" y1="38.3" x2="12.100000000000001" y2="38.3" stroke="#c8c8d0" stroke-width="1.1"/><line x1="3.2" y1="42.8" x2="12.100000000000001" y2="42.8" stroke="#c8c8d0" stroke-width="1.1"/><line x1="3.2" y1="47.3" x2="12.100000000000001" y2="47.3" stroke="#c8c8d0" stroke-width="1.1"/><line x1="3.2" y1="51.7" x2="12.100000000000001" y2="51.7" stroke="#c8c8d0" stroke-width="1.1"/><line x1="3.2" y1="56.2" x2="12.100000000000001" y2="56.2" stroke="#c8c8d0" stroke-width="1.1"/><line x1="3.2" y1="60.7" x2="12.100000000000001" y2="60.7" stroke="#c8c8d0" stroke-width="1.1"/><line x1="3.2" y1="65.1" x2="12.100000000000001" y2="65.1" stroke="#c8c8d0" stroke-width="1.1"/><line x1="3.2" y1="69.6" x2="12.100000000000001" y2="69.6" stroke="#c8c8d0" stroke-width="1.1"/><line x1="3.2" y1="74.1" x2="12.100000000000001" y2="74.1" stroke="#c8c8d0" stroke-width="1.1"/><line x1="1.5" y1="78.5" x2="12.8" y2="78.5" stroke="#e4e4e8" stroke-width="1.3"/></svg>
<div class="t" style="left:358.20px;top:360.12px;width:12.3px;text-align:center;font-size:6.8px;font-weight:bold;color:#f0f0f0;">6</div>
<div class="t" style="left:357.20px;top:438.02px;width:14.3px;text-align:center;font-size:6.8px;font-weight:bold;color:#f0f0f0;transform:scaleX(0.85);transform-origin:center center;">-64</div>
<div class="a" style="left:376.0px;top:366.7px;width:1.6px;height:71px;background:#e4e4e4"></div>
<div class="a" style="left:372.3px;top:371.8px;width:9px;height:13.3px;background:linear-gradient(#f08018 0,#f08018 2.6px,#fbe0c0 2.6px,#fbe0c0 5.2px,#f07010 5.2px,#f07010 8.2px,#fbe0c0 8.2px,#fbe0c0 10.8px,#f08018 10.8px);border-radius:2px"></div>
<div class="a" style="left:348.4px;top:380.0px;width:9.6px;height:8.8px;background:#3e3c43;border:1px solid #96949c;border-radius:1.5px"></div>
<div class="t" style="left:348.40px;top:380.88px;width:9.6px;text-align:center;font-size:7.3px;font-weight:bold;color:#f0f0f0;">M</div>
<div class="a" style="left:348.4px;top:390.4px;width:9.6px;height:8.8px;background:#3e3c43;border:1px solid #96949c;border-radius:1.5px"></div>
<div class="t" style="left:348.40px;top:391.72px;width:9.6px;text-align:center;font-size:6.5px;font-weight:bold;color:#f0f0f0;">+</div>
<div class="a" style="left:348.4px;top:400.9px;width:9.6px;height:8.8px;background:#3e3c43;border:1px solid #96949c;border-radius:1.5px"></div>
<div class="t" style="left:348.40px;top:401.78px;width:9.6px;text-align:center;font-size:7.3px;font-weight:bold;color:#f0f0f0;">N</div>
<div class="a" style="left:348.4px;top:411.4px;width:9.6px;height:8.8px;background:#3e3c43;border:1px solid #96949c;border-radius:1.5px"></div>
<div class="t" style="left:348.40px;top:412.23px;width:9.6px;text-align:center;font-size:7.3px;font-weight:bold;color:#f0f0f0;">E</div>
<div class="a" style="left:348.4px;top:421.8px;width:9.6px;height:8.8px;background:#3e3c43;border:1px solid #96949c;border-radius:1.5px"></div>
<div class="t" style="left:348.40px;top:422.68px;width:9.6px;text-align:center;font-size:7.3px;font-weight:bold;color:#f0f0f0;">D</div>
<div class="a" style="left:389.5px;top:335px;width:36px;height:113px;background:#36343b"></div>
<div class="a" style="left:389.5px;top:323.5px;width:36px;height:11.6px;background:#0ccb72;border-radius:5px 5px 0 0"></div>
<div class="t" style="left:390.00px;top:326.74px;width:36px;text-align:center;font-size:8px;color:#e8fff2;transform:scaleX(0.92);transform-origin:center center;letter-spacing:0.2px;">IN F</div>
<div class="a" style="left:391.0px;top:341px;width:33px;height:13px;background:#000;border:1.3px solid #c6c6c6"></div>
<div class="t" style="left:391.00px;top:343.60px;width:33px;text-align:center;font-size:8.3px;color:#d2d2c6;transform:scaleX(0.85);transform-origin:center center;">0.0</div>
<svg class="a" style="left:400.1px;top:357px" width="14.3" height="92"><rect x="1.5" y="1.5" width="11.3" height="89" fill="none" stroke="#b4b4bc" stroke-width="1.1"/><line x1="1.5" y1="11.5" x2="12.8" y2="11.5" stroke="#e4e4e8" stroke-width="1.3"/><line x1="3.2" y1="16.0" x2="12.100000000000001" y2="16.0" stroke="#c8c8d0" stroke-width="1.1"/><line x1="3.2" y1="20.4" x2="12.100000000000001" y2="20.4" stroke="#c8c8d0" stroke-width="1.1"/><line x1="1.5" y1="24.9" x2="12.8" y2="24.9" stroke="#e4e4e8" stroke-width="1.3"/><line x1="3.2" y1="29.4" x2="12.100000000000001" y2="29.4" stroke="#c8c8d0" stroke-width="1.1"/><line x1="3.2" y1="33.8" x2="12.100000000000001" y2="33.8" stroke="#c8c8d0" stroke-width="1.1"/><line x1="3.2" y1="38.3" x2="12.100000000000001" y2="38.3" stroke="#c8c8d0" stroke-width="1.1"/><line x1="3.2" y1="42.8" x2="12.100000000000001" y2="42.8" stroke="#c8c8d0" stroke-width="1.1"/><line x1="3.2" y1="47.3" x2="12.100000000000001" y2="47.3" stroke="#c8c8d0" stroke-width="1.1"/><line x1="3.2" y1="51.7" x2="12.100000000000001" y2="51.7" stroke="#c8c8d0" stroke-width="1.1"/><line x1="3.2" y1="56.2" x2="12.100000000000001" y2="56.2" stroke="#c8c8d0" stroke-width="1.1"/><line x1="3.2" y1="60.7" x2="12.100000000000001" y2="60.7" stroke="#c8c8d0" stroke-width="1.1"/><line x1="3.2" y1="65.1" x2="12.100000000000001" y2="65.1" stroke="#c8c8d0" stroke-width="1.1"/><line x1="3.2" y1="69.6" x2="12.100000000000001" y2="69.6" stroke="#c8c8d0" stroke-width="1.1"/><line x1="3.2" y1="74.1" x2="12.100000000000001" y2="74.1" stroke="#c8c8d0" stroke-width="1.1"/><line x1="1.5" y1="78.5" x2="12.8" y2="78.5" stroke="#e4e4e8" stroke-width="1.3"/></svg>
<div class="t" style="left:401.10px;top:360.12px;width:12.3px;text-align:center;font-size:6.8px;font-weight:bold;color:#f0f0f0;">6</div>
<div class="t" style="left:400.10px;top:438.02px;width:14.3px;text-align:center;font-size:6.8px;font-weight:bold;color:#f0f0f0;transform:scaleX(0.85);transform-origin:center center;">-64</div>
<div class="a" style="left:418.9px;top:366.7px;width:1.6px;height:71px;background:#e4e4e4"></div>
<div class="a" style="left:415.2px;top:371.8px;width:9px;height:13.3px;background:linear-gradient(#f08018 0,#f08018 2.6px,#fbe0c0 2.6px,#fbe0c0 5.2px,#f07010 5.2px,#f07010 8.2px,#fbe0c0 8.2px,#fbe0c0 10.8px,#f08018 10.8px);border-radius:2px"></div>
<div class="a" style="left:391.3px;top:380.0px;width:9.6px;height:8.8px;background:#3e3c43;border:1px solid #96949c;border-radius:1.5px"></div>
<div class="t" style="left:391.30px;top:380.88px;width:9.6px;text-align:center;font-size:7.3px;font-weight:bold;color:#f0f0f0;">M</div>
<div class="a" style="left:391.3px;top:390.4px;width:9.6px;height:8.8px;background:#3e3c43;border:1px solid #96949c;border-radius:1.5px"></div>
<div class="t" style="left:391.30px;top:391.72px;width:9.6px;text-align:center;font-size:6.5px;font-weight:bold;color:#f0f0f0;">+</div>
<div class="a" style="left:391.3px;top:400.9px;width:9.6px;height:8.8px;background:#3e3c43;border:1px solid #96949c;border-radius:1.5px"></div>
<div class="t" style="left:391.30px;top:401.78px;width:9.6px;text-align:center;font-size:7.3px;font-weight:bold;color:#f0f0f0;">N</div>
<div class="a" style="left:391.3px;top:411.4px;width:9.6px;height:8.8px;background:#3e3c43;border:1px solid #96949c;border-radius:1.5px"></div>
<div class="t" style="left:391.30px;top:412.23px;width:9.6px;text-align:center;font-size:7.3px;font-weight:bold;color:#f0f0f0;">E</div>
<div class="a" style="left:391.3px;top:421.8px;width:9.6px;height:8.8px;background:#3e3c43;border:1px solid #96949c;border-radius:1.5px"></div>
<div class="t" style="left:391.30px;top:422.68px;width:9.6px;text-align:center;font-size:7.3px;font-weight:bold;color:#f0f0f0;">D</div>
<div class="a" style="left:432.4px;top:335px;width:36px;height:113px;background:#36343b"></div>
<div class="a" style="left:432.4px;top:323.5px;width:36px;height:11.6px;background:#0ccb72;border-radius:5px 5px 0 0"></div>
<div class="t" style="left:432.90px;top:326.74px;width:36px;text-align:center;font-size:8px;color:#e8fff2;transform:scaleX(0.92);transform-origin:center center;letter-spacing:0.2px;">IN G</div>
<div class="a" style="left:433.9px;top:341px;width:33px;height:13px;background:#000;border:1.3px solid #c6c6c6"></div>
<div class="t" style="left:433.90px;top:343.60px;width:33px;text-align:center;font-size:8.3px;color:#d2d2c6;transform:scaleX(0.85);transform-origin:center center;">0.0</div>
<svg class="a" style="left:443.0px;top:357px" width="14.3" height="92"><rect x="1.5" y="1.5" width="11.3" height="89" fill="none" stroke="#b4b4bc" stroke-width="1.1"/><line x1="1.5" y1="11.5" x2="12.8" y2="11.5" stroke="#e4e4e8" stroke-width="1.3"/><line x1="3.2" y1="16.0" x2="12.100000000000001" y2="16.0" stroke="#c8c8d0" stroke-width="1.1"/><line x1="3.2" y1="20.4" x2="12.100000000000001" y2="20.4" stroke="#c8c8d0" stroke-width="1.1"/><line x1="1.5" y1="24.9" x2="12.8" y2="24.9" stroke="#e4e4e8" stroke-width="1.3"/><line x1="3.2" y1="29.4" x2="12.100000000000001" y2="29.4" stroke="#c8c8d0" stroke-width="1.1"/><line x1="3.2" y1="33.8" x2="12.100000000000001" y2="33.8" stroke="#c8c8d0" stroke-width="1.1"/><line x1="3.2" y1="38.3" x2="12.100000000000001" y2="38.3" stroke="#c8c8d0" stroke-width="1.1"/><line x1="3.2" y1="42.8" x2="12.100000000000001" y2="42.8" stroke="#c8c8d0" stroke-width="1.1"/><line x1="3.2" y1="47.3" x2="12.100000000000001" y2="47.3" stroke="#c8c8d0" stroke-width="1.1"/><line x1="3.2" y1="51.7" x2="12.100000000000001" y2="51.7" stroke="#c8c8d0" stroke-width="1.1"/><line x1="3.2" y1="56.2" x2="12.100000000000001" y2="56.2" stroke="#c8c8d0" stroke-width="1.1"/><line x1="3.2" y1="60.7" x2="12.100000000000001" y2="60.7" stroke="#c8c8d0" stroke-width="1.1"/><line x1="3.2" y1="65.1" x2="12.100000000000001" y2="65.1" stroke="#c8c8d0" stroke-width="1.1"/><line x1="3.2" y1="69.6" x2="12.100000000000001" y2="69.6" stroke="#c8c8d0" stroke-width="1.1"/><line x1="3.2" y1="74.1" x2="12.100000000000001" y2="74.1" stroke="#c8c8d0" stroke-width="1.1"/><line x1="1.5" y1="78.5" x2="12.8" y2="78.5" stroke="#e4e4e8" stroke-width="1.3"/></svg>
<div class="t" style="left:444.00px;top:360.12px;width:12.3px;text-align:center;font-size:6.8px;font-weight:bold;color:#f0f0f0;">6</div>
<div class="t" style="left:443.00px;top:438.02px;width:14.3px;text-align:center;font-size:6.8px;font-weight:bold;color:#f0f0f0;transform:scaleX(0.85);transform-origin:center center;">-64</div>
<div class="a" style="left:461.79999999999995px;top:366.7px;width:1.6px;height:71px;background:#e4e4e4"></div>
<div class="a" style="left:458.09999999999997px;top:371.8px;width:9px;height:13.3px;background:linear-gradient(#f08018 0,#f08018 2.6px,#fbe0c0 2.6px,#fbe0c0 5.2px,#f07010 5.2px,#f07010 8.2px,#fbe0c0 8.2px,#fbe0c0 10.8px,#f08018 10.8px);border-radius:2px"></div>
<div class="a" style="left:434.2px;top:380.0px;width:9.6px;height:8.8px;background:#3e3c43;border:1px solid #96949c;border-radius:1.5px"></div>
<div class="t" style="left:434.20px;top:380.88px;width:9.6px;text-align:center;font-size:7.3px;font-weight:bold;color:#f0f0f0;">M</div>
<div class="a" style="left:434.2px;top:390.4px;width:9.6px;height:8.8px;background:#3e3c43;border:1px solid #96949c;border-radius:1.5px"></div>
<div class="t" style="left:434.20px;top:391.72px;width:9.6px;text-align:center;font-size:6.5px;font-weight:bold;color:#f0f0f0;">+</div>
<div class="a" style="left:434.2px;top:400.9px;width:9.6px;height:8.8px;background:#3e3c43;border:1px solid #96949c;border-radius:1.5px"></div>
<div class="t" style="left:434.20px;top:401.78px;width:9.6px;text-align:center;font-size:7.3px;font-weight:bold;color:#f0f0f0;">N</div>
<div class="a" style="left:434.2px;top:411.4px;width:9.6px;height:8.8px;background:#3e3c43;border:1px solid #96949c;border-radius:1.5px"></div>
<div class="t" style="left:434.20px;top:412.23px;width:9.6px;text-align:center;font-size:7.3px;font-weight:bold;color:#f0f0f0;">E</div>
<div class="a" style="left:434.2px;top:421.8px;width:9.6px;height:8.8px;background:#3e3c43;border:1px solid #96949c;border-radius:1.5px"></div>
<div class="t" style="left:434.20px;top:422.68px;width:9.6px;text-align:center;font-size:7.3px;font-weight:bold;color:#f0f0f0;">D</div>
<div class="a" style="left:475.3px;top:335px;width:36px;height:113px;background:#36343b"></div>
<div class="a" style="left:475.3px;top:323.5px;width:36px;height:11.6px;background:#0ccb72;border-radius:5px 5px 0 0"></div>
<div class="t" style="left:475.80px;top:326.74px;width:36px;text-align:center;font-size:8px;color:#e8fff2;transform:scaleX(0.92);transform-origin:center center;letter-spacing:0.2px;">IN H</div>
<div class="a" style="left:476.8px;top:341px;width:33px;height:13px;background:#000;border:1.3px solid #c6c6c6"></div>
<div class="t" style="left:476.80px;top:343.60px;width:33px;text-align:center;font-size:8.3px;color:#d2d2c6;transform:scaleX(0.85);transform-origin:center center;">0.0</div>
<svg class="a" style="left:485.90000000000003px;top:357px" width="14.3" height="92"><rect x="1.5" y="1.5" width="11.3" height="89" fill="none" stroke="#b4b4bc" stroke-width="1.1"/><line x1="1.5" y1="11.5" x2="12.8" y2="11.5" stroke="#e4e4e8" stroke-width="1.3"/><line x1="3.2" y1="16.0" x2="12.100000000000001" y2="16.0" stroke="#c8c8d0" stroke-width="1.1"/><line x1="3.2" y1="20.4" x2="12.100000000000001" y2="20.4" stroke="#c8c8d0" stroke-width="1.1"/><line x1="1.5" y1="24.9" x2="12.8" y2="24.9" stroke="#e4e4e8" stroke-width="1.3"/><line x1="3.2" y1="29.4" x2="12.100000000000001" y2="29.4" stroke="#c8c8d0" stroke-width="1.1"/><line x1="3.2" y1="33.8" x2="12.100000000000001" y2="33.8" stroke="#c8c8d0" stroke-width="1.1"/><line x1="3.2" y1="38.3" x2="12.100000000000001" y2="38.3" stroke="#c8c8d0" stroke-width="1.1"/><line x1="3.2" y1="42.8" x2="12.100000000000001" y2="42.8" stroke="#c8c8d0" stroke-width="1.1"/><line x1="3.2" y1="47.3" x2="12.100000000000001" y2="47.3" stroke="#c8c8d0" stroke-width="1.1"/><line x1="3.2" y1="51.7" x2="12.100000000000001" y2="51.7" stroke="#c8c8d0" stroke-width="1.1"/><line x1="3.2" y1="56.2" x2="12.100000000000001" y2="56.2" stroke="#c8c8d0" stroke-width="1.1"/><line x1="3.2" y1="60.7" x2="12.100000000000001" y2="60.7" stroke="#c8c8d0" stroke-width="1.1"/><line x1="3.2" y1="65.1" x2="12.100000000000001" y2="65.1" stroke="#c8c8d0" stroke-width="1.1"/><line x1="3.2" y1="69.6" x2="12.100000000000001" y2="69.6" stroke="#c8c8d0" stroke-width="1.1"/><line x1="3.2" y1="74.1" x2="12.100000000000001" y2="74.1" stroke="#c8c8d0" stroke-width="1.1"/><line x1="1.5" y1="78.5" x2="12.8" y2="78.5" stroke="#e4e4e8" stroke-width="1.3"/></svg>
<div class="t" style="left:486.90px;top:360.12px;width:12.3px;text-align:center;font-size:6.8px;font-weight:bold;color:#f0f0f0;">6</div>
<div class="t" style="left:485.90px;top:438.02px;width:14.3px;text-align:center;font-size:6.8px;font-weight:bold;color:#f0f0f0;transform:scaleX(0.85);transform-origin:center center;">-64</div>
<div class="a" style="left:504.7px;top:366.7px;width:1.6px;height:71px;background:#e4e4e4"></div>
<div class="a" style="left:501.0px;top:371.8px;width:9px;height:13.3px;background:linear-gradient(#f08018 0,#f08018 2.6px,#fbe0c0 2.6px,#fbe0c0 5.2px,#f07010 5.2px,#f07010 8.2px,#fbe0c0 8.2px,#fbe0c0 10.8px,#f08018 10.8px);border-radius:2px"></div>
<div class="a" style="left:477.1px;top:380.0px;width:9.6px;height:8.8px;background:#3e3c43;border:1px solid #96949c;border-radius:1.5px"></div>
<div class="t" style="left:477.10px;top:380.88px;width:9.6px;text-align:center;font-size:7.3px;font-weight:bold;color:#f0f0f0;">M</div>
<div class="a" style="left:477.1px;top:390.4px;width:9.6px;height:8.8px;background:#3e3c43;border:1px solid #96949c;border-radius:1.5px"></div>
<div class="t" style="left:477.10px;top:391.72px;width:9.6px;text-align:center;font-size:6.5px;font-weight:bold;color:#f0f0f0;">+</div>
<div class="a" style="left:477.1px;top:400.9px;width:9.6px;height:8.8px;background:#3e3c43;border:1px solid #96949c;border-radius:1.5px"></div>
<div class="t" style="left:477.10px;top:401.78px;width:9.6px;text-align:center;font-size:7.3px;font-weight:bold;color:#f0f0f0;">N</div>
<div class="a" style="left:477.1px;top:411.4px;width:9.6px;height:8.8px;background:#3e3c43;border:1px solid #96949c;border-radius:1.5px"></div>
<div class="t" style="left:477.10px;top:412.23px;width:9.6px;text-align:center;font-size:7.3px;font-weight:bold;color:#f0f0f0;">E</div>
<div class="a" style="left:477.1px;top:421.8px;width:9.6px;height:8.8px;background:#3e3c43;border:1px solid #96949c;border-radius:1.5px"></div>
<div class="t" style="left:477.10px;top:422.68px;width:9.6px;text-align:center;font-size:7.3px;font-weight:bold;color:#f0f0f0;">D</div>
<div class="a" style="left:564.0px;top:335px;width:36px;height:113px;background:#36343b"></div>
<div class="a" style="left:564.0px;top:323.5px;width:36px;height:11.6px;background:#ffa40c;border-radius:5px 5px 0 0"></div>
<div class="t" style="left:564.50px;top:326.74px;width:36px;text-align:center;font-size:8px;color:#fff0c8;transform:scaleX(0.92);transform-origin:center center;letter-spacing:0.2px;">OUT 1</div>
<div class="a" style="left:563.0px;top:322.5px;width:38px;height:130px;border:1.2px solid #c0641a;border-radius:6px"></div>
<div class="a" style="left:565.5px;top:341px;width:33px;height:13px;background:#000;border:1.3px solid #c6c6c6"></div>
<div class="t" style="left:565.50px;top:343.60px;width:33px;text-align:center;font-size:8.3px;color:#d2d2c6;transform:scaleX(0.85);transform-origin:center center;">0.0</div>
<svg class="a" style="left:574.6px;top:357px" width="14.3" height="92"><rect x="1.5" y="1.5" width="11.3" height="89" fill="none" stroke="#b4b4bc" stroke-width="1.1"/><line x1="1.5" y1="11.5" x2="12.8" y2="11.5" stroke="#e4e4e8" stroke-width="1.3"/><line x1="3.2" y1="16.0" x2="12.100000000000001" y2="16.0" stroke="#c8c8d0" stroke-width="1.1"/><line x1="3.2" y1="20.4" x2="12.100000000000001" y2="20.4" stroke="#c8c8d0" stroke-width="1.1"/><line x1="1.5" y1="24.9" x2="12.8" y2="24.9" stroke="#e4e4e8" stroke-width="1.3"/><line x1="3.2" y1="29.4" x2="12.100000000000001" y2="29.4" stroke="#c8c8d0" stroke-width="1.1"/><line x1="3.2" y1="33.8" x2="12.100000000000001" y2="33.8" stroke="#c8c8d0" stroke-width="1.1"/><line x1="3.2" y1="38.3" x2="12.100000000000001" y2="38.3" stroke="#c8c8d0" stroke-width="1.1"/><line x1="3.2" y1="42.8" x2="12.100000000000001" y2="42.8" stroke="#c8c8d0" stroke-width="1.1"/><line x1="3.2" y1="47.3" x2="12.100000000000001" y2="47.3" stroke="#c8c8d0" stroke-width="1.1"/><line x1="3.2" y1="51.7" x2="12.100000000000001" y2="51.7" stroke="#c8c8d0" stroke-width="1.1"/><line x1="3.2" y1="56.2" x2="12.100000000000001" y2="56.2" stroke="#c8c8d0" stroke-width="1.1"/><line x1="3.2" y1="60.7" x2="12.100000000000001" y2="60.7" stroke="#c8c8d0" stroke-width="1.1"/><line x1="3.2" y1="65.1" x2="12.100000000000001" y2="65.1" stroke="#c8c8d0" stroke-width="1.1"/><line x1="3.2" y1="69.6" x2="12.100000000000001" y2="69.6" stroke="#c8c8d0" stroke-width="1.1"/><line x1="3.2" y1="74.1" x2="12.100000000000001" y2="74.1" stroke="#c8c8d0" stroke-width="1.1"/><line x1="1.5" y1="78.5" x2="12.8" y2="78.5" stroke="#e4e4e8" stroke-width="1.3"/></svg>
<div class="t" style="left:575.60px;top:360.12px;width:12.3px;text-align:center;font-size:6.8px;font-weight:bold;color:#f0f0f0;">6</div>
<div class="t" style="left:574.60px;top:438.02px;width:14.3px;text-align:center;font-size:6.8px;font-weight:bold;color:#f0f0f0;transform:scaleX(0.85);transform-origin:center center;">-64</div>
<div class="a" style="left:593.4px;top:366.7px;width:1.6px;height:71px;background:#e4e4e4"></div>
<div class="a" style="left:589.7px;top:371.8px;width:9px;height:13.3px;background:linear-gradient(#f08018 0,#f08018 2.6px,#fbe0c0 2.6px,#fbe0c0 5.2px,#f07010 5.2px,#f07010 8.2px,#fbe0c0 8.2px,#fbe0c0 10.8px,#f08018 10.8px);border-radius:2px"></div>
<div class="a" style="left:565.8px;top:380.0px;width:9.6px;height:8.8px;background:#3e3c43;border:1px solid #96949c;border-radius:1.5px"></div>
<div class="t" style="left:565.80px;top:380.88px;width:9.6px;text-align:center;font-size:7.3px;font-weight:bold;color:#f0f0f0;">M</div>
<div class="a" style="left:565.8px;top:390.4px;width:9.6px;height:8.8px;background:#3e3c43;border:1px solid #96949c;border-radius:1.5px"></div>
<div class="t" style="left:565.80px;top:391.33px;width:9.6px;text-align:center;font-size:7.3px;font-weight:bold;color:#f0f0f0;">E</div>
<div class="a" style="left:565.8px;top:400.9px;width:9.6px;height:8.8px;background:#3e3c43;border:1px solid #96949c;border-radius:1.5px"></div>
<div class="t" style="left:565.80px;top:401.78px;width:9.6px;text-align:center;font-size:7.3px;font-weight:bold;color:#f0f0f0;">D</div>
<div class="a" style="left:565.8px;top:411.4px;width:9.6px;height:8.8px;background:#f27a12;border:1px solid #f27a12;border-radius:1.5px"></div>
<div class="t" style="left:565.80px;top:412.23px;width:9.6px;text-align:center;font-size:7.3px;font-weight:bold;color:#8a3c00;">C</div>
<div class="a" style="left:565.8px;top:421.8px;width:9.6px;height:8.8px;background:#f27a12;border:1px solid #f27a12;border-radius:1.5px"></div>
<div class="t" style="left:565.80px;top:422.68px;width:9.6px;text-align:center;font-size:7.3px;font-weight:bold;color:#8a3c00;">L</div>
<div class="a" style="left:565.8px;top:432.2px;width:9.6px;height:8.8px;background:#3e3c43;border:1px solid #96949c;border-radius:1.5px"></div>
<div class="t" style="left:565.80px;top:433.52px;width:9.6px;text-align:center;font-size:6.5px;font-weight:bold;color:#f0f0f0;">+</div>
<div class="a" style="left:606.9px;top:335px;width:36px;height:113px;background:#36343b"></div>
<div class="a" style="left:606.9px;top:323.5px;width:36px;height:11.6px;background:#ffa40c;border-radius:5px 5px 0 0"></div>
<div class="t" style="left:607.40px;top:326.74px;width:36px;text-align:center;font-size:8px;color:#fff0c8;transform:scaleX(0.92);transform-origin:center center;letter-spacing:0.2px;">OUT 2</div>
<div class="a" style="left:608.4px;top:341px;width:33px;height:13px;background:#000;border:1.3px solid #c6c6c6"></div>
<div class="t" style="left:608.40px;top:343.60px;width:33px;text-align:center;font-size:8.3px;color:#d2d2c6;transform:scaleX(0.85);transform-origin:center center;">0.0</div>
<svg class="a" style="left:617.5px;top:357px" width="14.3" height="92"><rect x="1.5" y="1.5" width="11.3" height="89" fill="none" stroke="#b4b4bc" stroke-width="1.1"/><line x1="1.5" y1="11.5" x2="12.8" y2="11.5" stroke="#e4e4e8" stroke-width="1.3"/><line x1="3.2" y1="16.0" x2="12.100000000000001" y2="16.0" stroke="#c8c8d0" stroke-width="1.1"/><line x1="3.2" y1="20.4" x2="12.100000000000001" y2="20.4" stroke="#c8c8d0" stroke-width="1.1"/><line x1="1.5" y1="24.9" x2="12.8" y2="24.9" stroke="#e4e4e8" stroke-width="1.3"/><line x1="3.2" y1="29.4" x2="12.100000000000001" y2="29.4" stroke="#c8c8d0" stroke-width="1.1"/><line x1="3.2" y1="33.8" x2="12.100000000000001" y2="33.8" stroke="#c8c8d0" stroke-width="1.1"/><line x1="3.2" y1="38.3" x2="12.100000000000001" y2="38.3" stroke="#c8c8d0" stroke-width="1.1"/><line x1="3.2" y1="42.8" x2="12.100000000000001" y2="42.8" stroke="#c8c8d0" stroke-width="1.1"/><line x1="3.2" y1="47.3" x2="12.100000000000001" y2="47.3" stroke="#c8c8d0" stroke-width="1.1"/><line x1="3.2" y1="51.7" x2="12.100000000000001" y2="51.7" stroke="#c8c8d0" stroke-width="1.1"/><line x1="3.2" y1="56.2" x2="12.100000000000001" y2="56.2" stroke="#c8c8d0" stroke-width="1.1"/><line x1="3.2" y1="60.7" x2="12.100000000000001" y2="60.7" stroke="#c8c8d0" stroke-width="1.1"/><line x1="3.2" y1="65.1" x2="12.100000000000001" y2="65.1" stroke="#c8c8d0" stroke-width="1.1"/><line x1="3.2" y1="69.6" x2="12.100000000000001" y2="69.6" stroke="#c8c8d0" stroke-width="1.1"/><line x1="3.2" y1="74.1" x2="12.100000000000001" y2="74.1" stroke="#c8c8d0" stroke-width="1.1"/><line x1="1.5" y1="78.5" x2="12.8" y2="78.5" stroke="#e4e4e8" stroke-width="1.3"/></svg>
<div class="t" style="left:618.50px;top:360.12px;width:12.3px;text-align:center;font-size:6.8px;font-weight:bold;color:#f0f0f0;">6</div>
<div class="t" style="left:617.50px;top:438.02px;width:14.3px;text-align:center;font-size:6.8px;font-weight:bold;color:#f0f0f0;transform:scaleX(0.85);transform-origin:center center;">-64</div>
<div class="a" style="left:636.3px;top:366.7px;width:1.6px;height:71px;background:#e4e4e4"></div>
<div class="a" style="left:632.6px;top:371.8px;width:9px;height:13.3px;background:linear-gradient(#f08018 0,#f08018 2.6px,#fbe0c0 2.6px,#fbe0c0 5.2px,#f07010 5.2px,#f07010 8.2px,#fbe0c0 8.2px,#fbe0c0 10.8px,#f08018 10.8px);border-radius:2px"></div>
<div class="a" style="left:608.7px;top:380.0px;width:9.6px;height:8.8px;background:#3e3c43;border:1px solid #96949c;border-radius:1.5px"></div>
<div class="t" style="left:608.70px;top:380.88px;width:9.6px;text-align:center;font-size:7.3px;font-weight:bold;color:#f0f0f0;">M</div>
<div class="a" style="left:608.7px;top:390.4px;width:9.6px;height:8.8px;background:#3e3c43;border:1px solid #96949c;border-radius:1.5px"></div>
<div class="t" style="left:608.70px;top:391.33px;width:9.6px;text-align:center;font-size:7.3px;font-weight:bold;color:#f0f0f0;">E</div>
<div class="a" style="left:608.7px;top:400.9px;width:9.6px;height:8.8px;background:#3e3c43;border:1px solid #96949c;border-radius:1.5px"></div>
<div class="t" style="left:608.70px;top:401.78px;width:9.6px;text-align:center;font-size:7.3px;font-weight:bold;color:#f0f0f0;">D</div>
<div class="a" style="left:608.7px;top:411.4px;width:9.6px;height:8.8px;background:#3e3c43;border:1px solid #96949c;border-radius:1.5px"></div>
<div class="t" style="left:608.70px;top:412.23px;width:9.6px;text-align:center;font-size:7.3px;font-weight:bold;color:#f0f0f0;">C</div>
<div class="a" style="left:608.7px;top:421.8px;width:9.6px;height:8.8px;background:#3e3c43;border:1px solid #96949c;border-radius:1.5px"></div>
<div class="t" style="left:608.70px;top:422.68px;width:9.6px;text-align:center;font-size:7.3px;font-weight:bold;color:#f0f0f0;">L</div>
<div class="a" style="left:608.7px;top:432.2px;width:9.6px;height:8.8px;background:#3e3c43;border:1px solid #96949c;border-radius:1.5px"></div>
<div class="t" style="left:608.70px;top:433.52px;width:9.6px;text-align:center;font-size:6.5px;font-weight:bold;color:#f0f0f0;">+</div>
<div class="a" style="left:649.8px;top:335px;width:36px;height:113px;background:#36343b"></div>
<div class="a" style="left:649.8px;top:323.5px;width:36px;height:11.6px;background:#ffa40c;border-radius:5px 5px 0 0"></div>
<div class="t" style="left:650.30px;top:326.74px;width:36px;text-align:center;font-size:8px;color:#fff0c8;transform:scaleX(0.92);transform-origin:center center;letter-spacing:0.2px;">OUT 3</div>
<div class="a" style="left:651.3px;top:341px;width:33px;height:13px;background:#000;border:1.3px solid #c6c6c6"></div>
<div class="t" style="left:651.30px;top:343.60px;width:33px;text-align:center;font-size:8.3px;color:#d2d2c6;transform:scaleX(0.85);transform-origin:center center;">0.0</div>
<svg class="a" style="left:660.4px;top:357px" width="14.3" height="92"><rect x="1.5" y="1.5" width="11.3" height="89" fill="none" stroke="#b4b4bc" stroke-width="1.1"/><line x1="1.5" y1="11.5" x2="12.8" y2="11.5" stroke="#e4e4e8" stroke-width="1.3"/><line x1="3.2" y1="16.0" x2="12.100000000000001" y2="16.0" stroke="#c8c8d0" stroke-width="1.1"/><line x1="3.2" y1="20.4" x2="12.100000000000001" y2="20.4" stroke="#c8c8d0" stroke-width="1.1"/><line x1="1.5" y1="24.9" x2="12.8" y2="24.9" stroke="#e4e4e8" stroke-width="1.3"/><line x1="3.2" y1="29.4" x2="12.100000000000001" y2="29.4" stroke="#c8c8d0" stroke-width="1.1"/><line x1="3.2" y1="33.8" x2="12.100000000000001" y2="33.8" stroke="#c8c8d0" stroke-width="1.1"/><line x1="3.2" y1="38.3" x2="12.100000000000001" y2="38.3" stroke="#c8c8d0" stroke-width="1.1"/><line x1="3.2" y1="42.8" x2="12.100000000000001" y2="42.8" stroke="#c8c8d0" stroke-width="1.1"/><line x1="3.2" y1="47.3" x2="12.100000000000001" y2="47.3" stroke="#c8c8d0" stroke-width="1.1"/><line x1="3.2" y1="51.7" x2="12.100000000000001" y2="51.7" stroke="#c8c8d0" stroke-width="1.1"/><line x1="3.2" y1="56.2" x2="12.100000000000001" y2="56.2" stroke="#c8c8d0" stroke-width="1.1"/><line x1="3.2" y1="60.7" x2="12.100000000000001" y2="60.7" stroke="#c8c8d0" stroke-width="1.1"/><line x1="3.2" y1="65.1" x2="12.100000000000001" y2="65.1" stroke="#c8c8d0" stroke-width="1.1"/><line x1="3.2" y1="69.6" x2="12.100000000000001" y2="69.6" stroke="#c8c8d0" stroke-width="1.1"/><line x1="3.2" y1="74.1" x2="12.100000000000001" y2="74.1" stroke="#c8c8d0" stroke-width="1.1"/><line x1="1.5" y1="78.5" x2="12.8" y2="78.5" stroke="#e4e4e8" stroke-width="1.3"/></svg>
<div class="t" style="left:661.40px;top:360.12px;width:12.3px;text-align:center;font-size:6.8px;font-weight:bold;color:#f0f0f0;">6</div>
<div class="t" style="left:660.40px;top:438.02px;width:14.3px;text-align:center;font-size:6.8px;font-weight:bold;color:#f0f0f0;transform:scaleX(0.85);transform-origin:center center;">-64</div>
<div class="a" style="left:679.1999999999999px;top:366.7px;width:1.6px;height:71px;background:#e4e4e4"></div>
<div class="a" style="left:675.5px;top:371.8px;width:9px;height:13.3px;background:linear-gradient(#f08018 0,#f08018 2.6px,#fbe0c0 2.6px,#fbe0c0 5.2px,#f07010 5.2px,#f07010 8.2px,#fbe0c0 8.2px,#fbe0c0 10.8px,#f08018 10.8px);border-radius:2px"></div>
<div class="a" style="left:651.6px;top:380.0px;width:9.6px;height:8.8px;background:#3e3c43;border:1px solid #96949c;border-radius:1.5px"></div>
<div class="t" style="left:651.60px;top:380.88px;width:9.6px;text-align:center;font-size:7.3px;font-weight:bold;color:#f0f0f0;">M</div>
<div class="a" style="left:651.6px;top:390.4px;width:9.6px;height:8.8px;background:#3e3c43;border:1px solid #96949c;border-radius:1.5px"></div>
<div class="t" style="left:651.60px;top:391.33px;width:9.6px;text-align:center;font-size:7.3px;font-weight:bold;color:#f0f0f0;">E</div>
<div class="a" style="left:651.6px;top:400.9px;width:9.6px;height:8.8px;background:#3e3c43;border:1px solid #96949c;border-radius:1.5px"></div>
<div class="t" style="left:651.60px;top:401.78px;width:9.6px;text-align:center;font-size:7.3px;font-weight:bold;color:#f0f0f0;">D</div>
<div class="a" style="left:651.6px;top:411.4px;width:9.6px;height:8.8px;background:#3e3c43;border:1px solid #96949c;border-radius:1.5px"></div>
<div class="t" style="left:651.60px;top:412.23px;width:9.6px;text-align:center;font-size:7.3px;font-weight:bold;color:#f0f0f0;">C</div>
<div class="a" style="left:651.6px;top:421.8px;width:9.6px;height:8.8px;background:#3e3c43;border:1px solid #96949c;border-radius:1.5px"></div>
<div class="t" style="left:651.60px;top:422.68px;width:9.6px;text-align:center;font-size:7.3px;font-weight:bold;color:#f0f0f0;">L</div>
<div class="a" style="left:651.6px;top:432.2px;width:9.6px;height:8.8px;background:#3e3c43;border:1px solid #96949c;border-radius:1.5px"></div>
<div class="t" style="left:651.60px;top:433.52px;width:9.6px;text-align:center;font-size:6.5px;font-weight:bold;color:#f0f0f0;">+</div>
<div class="a" style="left:692.7px;top:335px;width:36px;height:113px;background:#36343b"></div>
<div class="a" style="left:692.7px;top:323.5px;width:36px;height:11.6px;background:#ffa40c;border-radius:5px 5px 0 0"></div>
<div class="t" style="left:693.20px;top:326.74px;width:36px;text-align:center;font-size:8px;color:#fff0c8;transform:scaleX(0.92);transform-origin:center center;letter-spacing:0.2px;">OUT 4</div>
<div class="a" style="left:694.2px;top:341px;width:33px;height:13px;background:#000;border:1.3px solid #c6c6c6"></div>
<div class="t" style="left:694.20px;top:343.60px;width:33px;text-align:center;font-size:8.3px;color:#d2d2c6;transform:scaleX(0.85);transform-origin:center center;">0.0</div>
<svg class="a" style="left:703.3000000000001px;top:357px" width="14.3" height="92"><rect x="1.5" y="1.5" width="11.3" height="89" fill="none" stroke="#b4b4bc" stroke-width="1.1"/><line x1="1.5" y1="11.5" x2="12.8" y2="11.5" stroke="#e4e4e8" stroke-width="1.3"/><line x1="3.2" y1="16.0" x2="12.100000000000001" y2="16.0" stroke="#c8c8d0" stroke-width="1.1"/><line x1="3.2" y1="20.4" x2="12.100000000000001" y2="20.4" stroke="#c8c8d0" stroke-width="1.1"/><line x1="1.5" y1="24.9" x2="12.8" y2="24.9" stroke="#e4e4e8" stroke-width="1.3"/><line x1="3.2" y1="29.4" x2="12.100000000000001" y2="29.4" stroke="#c8c8d0" stroke-width="1.1"/><line x1="3.2" y1="33.8" x2="12.100000000000001" y2="33.8" stroke="#c8c8d0" stroke-width="1.1"/><line x1="3.2" y1="38.3" x2="12.100000000000001" y2="38.3" stroke="#c8c8d0" stroke-width="1.1"/><line x1="3.2" y1="42.8" x2="12.100000000000001" y2="42.8" stroke="#c8c8d0" stroke-width="1.1"/><line x1="3.2" y1="47.3" x2="12.100000000000001" y2="47.3" stroke="#c8c8d0" stroke-width="1.1"/><line x1="3.2" y1="51.7" x2="12.100000000000001" y2="51.7" stroke="#c8c8d0" stroke-width="1.1"/><line x1="3.2" y1="56.2" x2="12.100000000000001" y2="56.2" stroke="#c8c8d0" stroke-width="1.1"/><line x1="3.2" y1="60.7" x2="12.100000000000001" y2="60.7" stroke="#c8c8d0" stroke-width="1.1"/><line x1="3.2" y1="65.1" x2="12.100000000000001" y2="65.1" stroke="#c8c8d0" stroke-width="1.1"/><line x1="3.2" y1="69.6" x2="12.100000000000001" y2="69.6" stroke="#c8c8d0" stroke-width="1.1"/><line x1="3.2" y1="74.1" x2="12.100000000000001" y2="74.1" stroke="#c8c8d0" stroke-width="1.1"/><line x1="1.5" y1="78.5" x2="12.8" y2="78.5" stroke="#e4e4e8" stroke-width="1.3"/></svg>
<div class="t" style="left:704.30px;top:360.12px;width:12.3px;text-align:center;font-size:6.8px;font-weight:bold;color:#f0f0f0;">6</div>
<div class="t" style="left:703.30px;top:438.02px;width:14.3px;text-align:center;font-size:6.8px;font-weight:bold;color:#f0f0f0;transform:scaleX(0.85);transform-origin:center center;">-64</div>
<div class="a" style="left:722.1px;top:366.7px;width:1.6px;height:71px;background:#e4e4e4"></div>
<div class="a" style="left:718.4000000000001px;top:371.8px;width:9px;height:13.3px;background:linear-gradient(#f08018 0,#f08018 2.6px,#fbe0c0 2.6px,#fbe0c0 5.2px,#f07010 5.2px,#f07010 8.2px,#fbe0c0 8.2px,#fbe0c0 10.8px,#f08018 10.8px);border-radius:2px"></div>
<div class="a" style="left:694.5px;top:380.0px;width:9.6px;height:8.8px;background:#3e3c43;border:1px solid #96949c;border-radius:1.5px"></div>
<div class="t" style="left:694.50px;top:380.88px;width:9.6px;text-align:center;font-size:7.3px;font-weight:bold;color:#f0f0f0;">M</div>
<div class="a" style="left:694.5px;top:390.4px;width:9.6px;height:8.8px;background:#3e3c43;border:1px solid #96949c;border-radius:1.5px"></div>
<div class="t" style="left:694.50px;top:391.33px;width:9.6px;text-align:center;font-size:7.3px;font-weight:bold;color:#f0f0f0;">E</div>
<div class="a" style="left:694.5px;top:400.9px;width:9.6px;height:8.8px;background:#3e3c43;border:1px solid #96949c;border-radius:1.5px"></div>
<div class="t" style="left:694.50px;top:401.78px;width:9.6px;text-align:center;font-size:7.3px;font-weight:bold;color:#f0f0f0;">D</div>
<div class="a" style="left:694.5px;top:411.4px;width:9.6px;height:8.8px;background:#3e3c43;border:1px solid #96949c;border-radius:1.5px"></div>
<div class="t" style="left:694.50px;top:412.23px;width:9.6px;text-align:center;font-size:7.3px;font-weight:bold;color:#f0f0f0;">C</div>
<div class="a" style="left:694.5px;top:421.8px;width:9.6px;height:8.8px;background:#3e3c43;border:1px solid #96949c;border-radius:1.5px"></div>
<div class="t" style="left:694.50px;top:422.68px;width:9.6px;text-align:center;font-size:7.3px;font-weight:bold;color:#f0f0f0;">L</div>
<div class="a" style="left:694.5px;top:432.2px;width:9.6px;height:8.8px;background:#3e3c43;border:1px solid #96949c;border-radius:1.5px"></div>
<div class="t" style="left:694.50px;top:433.52px;width:9.6px;text-align:center;font-size:6.5px;font-weight:bold;color:#f0f0f0;">+</div>
<div class="a" style="left:735.6px;top:335px;width:36px;height:113px;background:#36343b"></div>
<div class="a" style="left:735.6px;top:323.5px;width:36px;height:11.6px;background:#ffa40c;border-radius:5px 5px 0 0"></div>
<div class="t" style="left:736.10px;top:326.74px;width:36px;text-align:center;font-size:8px;color:#fff0c8;transform:scaleX(0.92);transform-origin:center center;letter-spacing:0.2px;">OUT 5</div>
<div class="a" style="left:737.1px;top:341px;width:33px;height:13px;background:#000;border:1.3px solid #c6c6c6"></div>
<div class="t" style="left:737.10px;top:343.60px;width:33px;text-align:center;font-size:8.3px;color:#d2d2c6;transform:scaleX(0.85);transform-origin:center center;">0.0</div>
<svg class="a" style="left:746.2px;top:357px" width="14.3" height="92"><rect x="1.5" y="1.5" width="11.3" height="89" fill="none" stroke="#b4b4bc" stroke-width="1.1"/><line x1="1.5" y1="11.5" x2="12.8" y2="11.5" stroke="#e4e4e8" stroke-width="1.3"/><line x1="3.2" y1="16.0" x2="12.100000000000001" y2="16.0" stroke="#c8c8d0" stroke-width="1.1"/><line x1="3.2" y1="20.4" x2="12.100000000000001" y2="20.4" stroke="#c8c8d0" stroke-width="1.1"/><line x1="1.5" y1="24.9" x2="12.8" y2="24.9" stroke="#e4e4e8" stroke-width="1.3"/><line x1="3.2" y1="29.4" x2="12.100000000000001" y2="29.4" stroke="#c8c8d0" stroke-width="1.1"/><line x1="3.2" y1="33.8" x2="12.100000000000001" y2="33.8" stroke="#c8c8d0" stroke-width="1.1"/><line x1="3.2" y1="38.3" x2="12.100000000000001" y2="38.3" stroke="#c8c8d0" stroke-width="1.1"/><line x1="3.2" y1="42.8" x2="12.100000000000001" y2="42.8" stroke="#c8c8d0" stroke-width="1.1"/><line x1="3.2" y1="47.3" x2="12.100000000000001" y2="47.3" stroke="#c8c8d0" stroke-width="1.1"/><line x1="3.2" y1="51.7" x2="12.100000000000001" y2="51.7" stroke="#c8c8d0" stroke-width="1.1"/><line x1="3.2" y1="56.2" x2="12.100000000000001" y2="56.2" stroke="#c8c8d0" stroke-width="1.1"/><line x1="3.2" y1="60.7" x2="12.100000000000001" y2="60.7" stroke="#c8c8d0" stroke-width="1.1"/><line x1="3.2" y1="65.1" x2="12.100000000000001" y2="65.1" stroke="#c8c8d0" stroke-width="1.1"/><line x1="3.2" y1="69.6" x2="12.100000000000001" y2="69.6" stroke="#c8c8d0" stroke-width="1.1"/><line x1="3.2" y1="74.1" x2="12.100000000000001" y2="74.1" stroke="#c8c8d0" stroke-width="1.1"/><line x1="1.5" y1="78.5" x2="12.8" y2="78.5" stroke="#e4e4e8" stroke-width="1.3"/></svg>
<div class="t" style="left:747.20px;top:360.12px;width:12.3px;text-align:center;font-size:6.8px;font-weight:bold;color:#f0f0f0;">6</div>
<div class="t" style="left:746.20px;top:438.02px;width:14.3px;text-align:center;font-size:6.8px;font-weight:bold;color:#f0f0f0;transform:scaleX(0.85);transform-origin:center center;">-64</div>
<div class="a" style="left:765.0px;top:366.7px;width:1.6px;height:71px;background:#e4e4e4"></div>
<div class="a" style="left:761.3000000000001px;top:371.8px;width:9px;height:13.3px;background:linear-gradient(#f08018 0,#f08018 2.6px,#fbe0c0 2.6px,#fbe0c0 5.2px,#f07010 5.2px,#f07010 8.2px,#fbe0c0 8.2px,#fbe0c0 10.8px,#f08018 10.8px);border-radius:2px"></div>
<div class="a" style="left:737.4px;top:380.0px;width:9.6px;height:8.8px;background:#3e3c43;border:1px solid #96949c;border-radius:1.5px"></div>
<div class="t" style="left:737.40px;top:380.88px;width:9.6px;text-align:center;font-size:7.3px;font-weight:bold;color:#f0f0f0;">M</div>
<div class="a" style="left:737.4px;top:390.4px;width:9.6px;height:8.8px;background:#3e3c43;border:1px solid #96949c;border-radius:1.5px"></div>
<div class="t" style="left:737.40px;top:391.33px;width:9.6px;text-align:center;font-size:7.3px;font-weight:bold;color:#f0f0f0;">E</div>
<div class="a" style="left:737.4px;top:400.9px;width:9.6px;height:8.8px;background:#3e3c43;border:1px solid #96949c;border-radius:1.5px"></div>
<div class="t" style="left:737.40px;top:401.78px;width:9.6px;text-align:center;font-size:7.3px;font-weight:bold;color:#f0f0f0;">D</div>
<div class="a" style="left:737.4px;top:411.4px;width:9.6px;height:8.8px;background:#3e3c43;border:1px solid #96949c;border-radius:1.5px"></div>
<div class="t" style="left:737.40px;top:412.23px;width:9.6px;text-align:center;font-size:7.3px;font-weight:bold;color:#f0f0f0;">C</div>
<div class="a" style="left:737.4px;top:421.8px;width:9.6px;height:8.8px;background:#3e3c43;border:1px solid #96949c;border-radius:1.5px"></div>
<div class="t" style="left:737.40px;top:422.68px;width:9.6px;text-align:center;font-size:7.3px;font-weight:bold;color:#f0f0f0;">L</div>
<div class="a" style="left:737.4px;top:432.2px;width:9.6px;height:8.8px;background:#3e3c43;border:1px solid #96949c;border-radius:1.5px"></div>
<div class="t" style="left:737.40px;top:433.52px;width:9.6px;text-align:center;font-size:6.5px;font-weight:bold;color:#f0f0f0;">+</div>
<div class="a" style="left:778.5px;top:335px;width:36px;height:113px;background:#36343b"></div>
<div class="a" style="left:778.5px;top:323.5px;width:36px;height:11.6px;background:#ffa40c;border-radius:5px 5px 0 0"></div>
<div class="t" style="left:779.00px;top:326.74px;width:36px;text-align:center;font-size:8px;color:#fff0c8;transform:scaleX(0.92);transform-origin:center center;letter-spacing:0.2px;">OUT 6</div>
<div class="a" style="left:780.0px;top:341px;width:33px;height:13px;background:#000;border:1.3px solid #c6c6c6"></div>
<div class="t" style="left:780.00px;top:343.60px;width:33px;text-align:center;font-size:8.3px;color:#d2d2c6;transform:scaleX(0.85);transform-origin:center center;">0.0</div>
<svg class="a" style="left:789.1px;top:357px" width="14.3" height="92"><rect x="1.5" y="1.5" width="11.3" height="89" fill="none" stroke="#b4b4bc" stroke-width="1.1"/><line x1="1.5" y1="11.5" x2="12.8" y2="11.5" stroke="#e4e4e8" stroke-width="1.3"/><line x1="3.2" y1="16.0" x2="12.100000000000001" y2="16.0" stroke="#c8c8d0" stroke-width="1.1"/><line x1="3.2" y1="20.4" x2="12.100000000000001" y2="20.4" stroke="#c8c8d0" stroke-width="1.1"/><line x1="1.5" y1="24.9" x2="12.8" y2="24.9" stroke="#e4e4e8" stroke-width="1.3"/><line x1="3.2" y1="29.4" x2="12.100000000000001" y2="29.4" stroke="#c8c8d0" stroke-width="1.1"/><line x1="3.2" y1="33.8" x2="12.100000000000001" y2="33.8" stroke="#c8c8d0" stroke-width="1.1"/><line x1="3.2" y1="38.3" x2="12.100000000000001" y2="38.3" stroke="#c8c8d0" stroke-width="1.1"/><line x1="3.2" y1="42.8" x2="12.100000000000001" y2="42.8" stroke="#c8c8d0" stroke-width="1.1"/><line x1="3.2" y1="47.3" x2="12.100000000000001" y2="47.3" stroke="#c8c8d0" stroke-width="1.1"/><line x1="3.2" y1="51.7" x2="12.100000000000001" y2="51.7" stroke="#c8c8d0" stroke-width="1.1"/><line x1="3.2" y1="56.2" x2="12.100000000000001" y2="56.2" stroke="#c8c8d0" stroke-width="1.1"/><line x1="3.2" y1="60.7" x2="12.100000000000001" y2="60.7" stroke="#c8c8d0" stroke-width="1.1"/><line x1="3.2" y1="65.1" x2="12.100000000000001" y2="65.1" stroke="#c8c8d0" stroke-width="1.1"/><line x1="3.2" y1="69.6" x2="12.100000000000001" y2="69.6" stroke="#c8c8d0" stroke-width="1.1"/><line x1="3.2" y1="74.1" x2="12.100000000000001" y2="74.1" stroke="#c8c8d0" stroke-width="1.1"/><line x1="1.5" y1="78.5" x2="12.8" y2="78.5" stroke="#e4e4e8" stroke-width="1.3"/></svg>
<div class="t" style="left:790.10px;top:360.12px;width:12.3px;text-align:center;font-size:6.8px;font-weight:bold;color:#f0f0f0;">6</div>
<div class="t" style="left:789.10px;top:438.02px;width:14.3px;text-align:center;font-size:6.8px;font-weight:bold;color:#f0f0f0;transform:scaleX(0.85);transform-origin:center center;">-64</div>
<div class="a" style="left:807.9px;top:366.7px;width:1.6px;height:71px;background:#e4e4e4"></div>
<div class="a" style="left:804.2px;top:371.8px;width:9px;height:13.3px;background:linear-gradient(#f08018 0,#f08018 2.6px,#fbe0c0 2.6px,#fbe0c0 5.2px,#f07010 5.2px,#f07010 8.2px,#fbe0c0 8.2px,#fbe0c0 10.8px,#f08018 10.8px);border-radius:2px"></div>
<div class="a" style="left:780.3px;top:380.0px;width:9.6px;height:8.8px;background:#3e3c43;border:1px solid #96949c;border-radius:1.5px"></div>
<div class="t" style="left:780.30px;top:380.88px;width:9.6px;text-align:center;font-size:7.3px;font-weight:bold;color:#f0f0f0;">M</div>
<div class="a" style="left:780.3px;top:390.4px;width:9.6px;height:8.8px;background:#3e3c43;border:1px solid #96949c;border-radius:1.5px"></div>
<div class="t" style="left:780.30px;top:391.33px;width:9.6px;text-align:center;font-size:7.3px;font-weight:bold;color:#f0f0f0;">E</div>
<div class="a" style="left:780.3px;top:400.9px;width:9.6px;height:8.8px;background:#3e3c43;border:1px solid #96949c;border-radius:1.5px"></div>
<div class="t" style="left:780.30px;top:401.78px;width:9.6px;text-align:center;font-size:7.3px;font-weight:bold;color:#f0f0f0;">D</div>
<div class="a" style="left:780.3px;top:411.4px;width:9.6px;height:8.8px;background:#3e3c43;border:1px solid #96949c;border-radius:1.5px"></div>
<div class="t" style="left:780.30px;top:412.23px;width:9.6px;text-align:center;font-size:7.3px;font-weight:bold;color:#f0f0f0;">C</div>
<div class="a" style="left:780.3px;top:421.8px;width:9.6px;height:8.8px;background:#3e3c43;border:1px solid #96949c;border-radius:1.5px"></div>
<div class="t" style="left:780.30px;top:422.68px;width:9.6px;text-align:center;font-size:7.3px;font-weight:bold;color:#f0f0f0;">L</div>
<div class="a" style="left:780.3px;top:432.2px;width:9.6px;height:8.8px;background:#3e3c43;border:1px solid #96949c;border-radius:1.5px"></div>
<div class="t" style="left:780.30px;top:433.52px;width:9.6px;text-align:center;font-size:6.5px;font-weight:bold;color:#f0f0f0;">+</div>
<div class="a" style="left:821.4px;top:335px;width:36px;height:113px;background:#36343b"></div>
<div class="a" style="left:821.4px;top:323.5px;width:36px;height:11.6px;background:#ffa40c;border-radius:5px 5px 0 0"></div>
<div class="t" style="left:821.90px;top:326.74px;width:36px;text-align:center;font-size:8px;color:#fff0c8;transform:scaleX(0.92);transform-origin:center center;letter-spacing:0.2px;">OUT 7</div>
<div class="a" style="left:822.9px;top:341px;width:33px;height:13px;background:#000;border:1.3px solid #c6c6c6"></div>
<div class="t" style="left:822.90px;top:343.60px;width:33px;text-align:center;font-size:8.3px;color:#d2d2c6;transform:scaleX(0.85);transform-origin:center center;">0.0</div>
<svg class="a" style="left:832.0px;top:357px" width="14.3" height="92"><rect x="1.5" y="1.5" width="11.3" height="89" fill="none" stroke="#b4b4bc" stroke-width="1.1"/><line x1="1.5" y1="11.5" x2="12.8" y2="11.5" stroke="#e4e4e8" stroke-width="1.3"/><line x1="3.2" y1="16.0" x2="12.100000000000001" y2="16.0" stroke="#c8c8d0" stroke-width="1.1"/><line x1="3.2" y1="20.4" x2="12.100000000000001" y2="20.4" stroke="#c8c8d0" stroke-width="1.1"/><line x1="1.5" y1="24.9" x2="12.8" y2="24.9" stroke="#e4e4e8" stroke-width="1.3"/><line x1="3.2" y1="29.4" x2="12.100000000000001" y2="29.4" stroke="#c8c8d0" stroke-width="1.1"/><line x1="3.2" y1="33.8" x2="12.100000000000001" y2="33.8" stroke="#c8c8d0" stroke-width="1.1"/><line x1="3.2" y1="38.3" x2="12.100000000000001" y2="38.3" stroke="#c8c8d0" stroke-width="1.1"/><line x1="3.2" y1="42.8" x2="12.100000000000001" y2="42.8" stroke="#c8c8d0" stroke-width="1.1"/><line x1="3.2" y1="47.3" x2="12.100000000000001" y2="47.3" stroke="#c8c8d0" stroke-width="1.1"/><line x1="3.2" y1="51.7" x2="12.100000000000001" y2="51.7" stroke="#c8c8d0" stroke-width="1.1"/><line x1="3.2" y1="56.2" x2="12.100000000000001" y2="56.2" stroke="#c8c8d0" stroke-width="1.1"/><line x1="3.2" y1="60.7" x2="12.100000000000001" y2="60.7" stroke="#c8c8d0" stroke-width="1.1"/><line x1="3.2" y1="65.1" x2="12.100000000000001" y2="65.1" stroke="#c8c8d0" stroke-width="1.1"/><line x1="3.2" y1="69.6" x2="12.100000000000001" y2="69.6" stroke="#c8c8d0" stroke-width="1.1"/><line x1="3.2" y1="74.1" x2="12.100000000000001" y2="74.1" stroke="#c8c8d0" stroke-width="1.1"/><line x1="1.5" y1="78.5" x2="12.8" y2="78.5" stroke="#e4e4e8" stroke-width="1.3"/></svg>
<div class="t" style="left:833.00px;top:360.12px;width:12.3px;text-align:center;font-size:6.8px;font-weight:bold;color:#f0f0f0;">6</div>
<div class="t" style="left:832.00px;top:438.02px;width:14.3px;text-align:center;font-size:6.8px;font-weight:bold;color:#f0f0f0;transform:scaleX(0.85);transform-origin:center center;">-64</div>
<div class="a" style="left:850.8px;top:366.7px;width:1.6px;height:71px;background:#e4e4e4"></div>
<div class="a" style="left:847.1px;top:371.8px;width:9px;height:13.3px;background:linear-gradient(#f08018 0,#f08018 2.6px,#fbe0c0 2.6px,#fbe0c0 5.2px,#f07010 5.2px,#f07010 8.2px,#fbe0c0 8.2px,#fbe0c0 10.8px,#f08018 10.8px);border-radius:2px"></div>
<div class="a" style="left:823.2px;top:380.0px;width:9.6px;height:8.8px;background:#3e3c43;border:1px solid #96949c;border-radius:1.5px"></div>
<div class="t" style="left:823.20px;top:380.88px;width:9.6px;text-align:center;font-size:7.3px;font-weight:bold;color:#f0f0f0;">M</div>
<div class="a" style="left:823.2px;top:390.4px;width:9.6px;height:8.8px;background:#3e3c43;border:1px solid #96949c;border-radius:1.5px"></div>
<div class="t" style="left:823.20px;top:391.33px;width:9.6px;text-align:center;font-size:7.3px;font-weight:bold;color:#f0f0f0;">E</div>
<div class="a" style="left:823.2px;top:400.9px;width:9.6px;height:8.8px;background:#3e3c43;border:1px solid #96949c;border-radius:1.5px"></div>
<div class="t" style="left:823.20px;top:401.78px;width:9.6px;text-align:center;font-size:7.3px;font-weight:bold;color:#f0f0f0;">D</div>
<div class="a" style="left:823.2px;top:411.4px;width:9.6px;height:8.8px;background:#3e3c43;border:1px solid #96949c;border-radius:1.5px"></div>
<div class="t" style="left:823.20px;top:412.23px;width:9.6px;text-align:center;font-size:7.3px;font-weight:bold;color:#f0f0f0;">C</div>
<div class="a" style="left:823.2px;top:421.8px;width:9.6px;height:8.8px;background:#3e3c43;border:1px solid #96949c;border-radius:1.5px"></div>
<div class="t" style="left:823.20px;top:422.68px;width:9.6px;text-align:center;font-size:7.3px;font-weight:bold;color:#f0f0f0;">L</div>
<div class="a" style="left:823.2px;top:432.2px;width:9.6px;height:8.8px;background:#3e3c43;border:1px solid #96949c;border-radius:1.5px"></div>
<div class="t" style="left:823.20px;top:433.52px;width:9.6px;text-align:center;font-size:6.5px;font-weight:bold;color:#f0f0f0;">+</div>
<div class="a" style="left:864.3px;top:335px;width:36px;height:113px;background:#36343b"></div>
<div class="a" style="left:864.3px;top:323.5px;width:36px;height:11.6px;background:#ffa40c;border-radius:5px 5px 0 0"></div>
<div class="t" style="left:864.80px;top:326.74px;width:36px;text-align:center;font-size:8px;color:#fff0c8;transform:scaleX(0.92);transform-origin:center center;letter-spacing:0.2px;">OUT 8</div>
<div class="a" style="left:865.8px;top:341px;width:33px;height:13px;background:#000;border:1.3px solid #c6c6c6"></div>
<div class="t" style="left:865.80px;top:343.60px;width:33px;text-align:center;font-size:8.3px;color:#d2d2c6;transform:scaleX(0.85);transform-origin:center center;">0.0</div>
<svg class="a" style="left:874.9px;top:357px" width="14.3" height="92"><rect x="1.5" y="1.5" width="11.3" height="89" fill="none" stroke="#b4b4bc" stroke-width="1.1"/><line x1="1.5" y1="11.5" x2="12.8" y2="11.5" stroke="#e4e4e8" stroke-width="1.3"/><line x1="3.2" y1="16.0" x2="12.100000000000001" y2="16.0" stroke="#c8c8d0" stroke-width="1.1"/><line x1="3.2" y1="20.4" x2="12.100000000000001" y2="20.4" stroke="#c8c8d0" stroke-width="1.1"/><line x1="1.5" y1="24.9" x2="12.8" y2="24.9" stroke="#e4e4e8" stroke-width="1.3"/><line x1="3.2" y1="29.4" x2="12.100000000000001" y2="29.4" stroke="#c8c8d0" stroke-width="1.1"/><line x1="3.2" y1="33.8" x2="12.100000000000001" y2="33.8" stroke="#c8c8d0" stroke-width="1.1"/><line x1="3.2" y1="38.3" x2="12.100000000000001" y2="38.3" stroke="#c8c8d0" stroke-width="1.1"/><line x1="3.2" y1="42.8" x2="12.100000000000001" y2="42.8" stroke="#c8c8d0" stroke-width="1.1"/><line x1="3.2" y1="47.3" x2="12.100000000000001" y2="47.3" stroke="#c8c8d0" stroke-width="1.1"/><line x1="3.2" y1="51.7" x2="12.100000000000001" y2="51.7" stroke="#c8c8d0" stroke-width="1.1"/><line x1="3.2" y1="56.2" x2="12.100000000000001" y2="56.2" stroke="#c8c8d0" stroke-width="1.1"/><line x1="3.2" y1="60.7" x2="12.100000000000001" y2="60.7" stroke="#c8c8d0" stroke-width="1.1"/><line x1="3.2" y1="65.1" x2="12.100000000000001" y2="65.1" stroke="#c8c8d0" stroke-width="1.1"/><line x1="3.2" y1="69.6" x2="12.100000000000001" y2="69.6" stroke="#c8c8d0" stroke-width="1.1"/><line x1="3.2" y1="74.1" x2="12.100000000000001" y2="74.1" stroke="#c8c8d0" stroke-width="1.1"/><line x1="1.5" y1="78.5" x2="12.8" y2="78.5" stroke="#e4e4e8" stroke-width="1.3"/></svg>
<div class="t" style="left:875.90px;top:360.12px;width:12.3px;text-align:center;font-size:6.8px;font-weight:bold;color:#f0f0f0;">6</div>
<div class="t" style="left:874.90px;top:438.02px;width:14.3px;text-align:center;font-size:6.8px;font-weight:bold;color:#f0f0f0;transform:scaleX(0.85);transform-origin:center center;">-64</div>
<div class="a" style="left:893.6999999999999px;top:366.7px;width:1.6px;height:71px;background:#e4e4e4"></div>
<div class="a" style="left:890.0px;top:371.8px;width:9px;height:13.3px;background:linear-gradient(#f08018 0,#f08018 2.6px,#fbe0c0 2.6px,#fbe0c0 5.2px,#f07010 5.2px,#f07010 8.2px,#fbe0c0 8.2px,#fbe0c0 10.8px,#f08018 10.8px);border-radius:2px"></div>
<div class="a" style="left:866.1px;top:380.0px;width:9.6px;height:8.8px;background:#3e3c43;border:1px solid #96949c;border-radius:1.5px"></div>
<div class="t" style="left:866.10px;top:380.88px;width:9.6px;text-align:center;font-size:7.3px;font-weight:bold;color:#f0f0f0;">M</div>
<div class="a" style="left:866.1px;top:390.4px;width:9.6px;height:8.8px;background:#3e3c43;border:1px solid #96949c;border-radius:1.5px"></div>
<div class="t" style="left:866.10px;top:391.33px;width:9.6px;text-align:center;font-size:7.3px;font-weight:bold;color:#f0f0f0;">E</div>
<div class="a" style="left:866.1px;top:400.9px;width:9.6px;height:8.8px;background:#3e3c43;border:1px solid #96949c;border-radius:1.5px"></div>
<div class="t" style="left:866.10px;top:401.78px;width:9.6px;text-align:center;font-size:7.3px;font-weight:bold;color:#f0f0f0;">D</div>
<div class="a" style="left:866.1px;top:411.4px;width:9.6px;height:8.8px;background:#3e3c43;border:1px solid #96949c;border-radius:1.5px"></div>
<div class="t" style="left:866.10px;top:412.23px;width:9.6px;text-align:center;font-size:7.3px;font-weight:bold;color:#f0f0f0;">C</div>
<div class="a" style="left:866.1px;top:421.8px;width:9.6px;height:8.8px;background:#3e3c43;border:1px solid #96949c;border-radius:1.5px"></div>
<div class="t" style="left:866.10px;top:422.68px;width:9.6px;text-align:center;font-size:7.3px;font-weight:bold;color:#f0f0f0;">L</div>
<div class="a" style="left:866.1px;top:432.2px;width:9.6px;height:8.8px;background:#3e3c43;border:1px solid #96949c;border-radius:1.5px"></div>
<div class="t" style="left:866.10px;top:433.52px;width:9.6px;text-align:center;font-size:6.5px;font-weight:bold;color:#f0f0f0;">+</div>
<div class="a" style="left:516.7px;top:344px;width:20.3px;height:101.5px;border:1.5px solid #9a9aa0;border-radius:3px"></div>
<div class="a" style="left:522.1px;top:379.5px;width:9.6px;height:8.8px;background:#3e3c43;border:1px solid #96949c;border-radius:1.5px"></div>
<div class="t" style="left:522.10px;top:380.38px;width:9.6px;text-align:center;font-size:7.3px;font-weight:bold;color:#f0f0f0;">M</div>
<div class="a" style="left:522.1px;top:389.9px;width:9.6px;height:8.8px;background:#3e3c43;border:1px solid #96949c;border-radius:1.5px"></div>
<div class="t" style="left:522.10px;top:391.17px;width:9.6px;text-align:center;font-size:6.5px;font-weight:bold;color:#f0f0f0;">+</div>
<div class="a" style="left:522.1px;top:400.3px;width:9.6px;height:8.8px;background:#3e3c43;border:1px solid #96949c;border-radius:1.5px"></div>
<div class="t" style="left:522.10px;top:401.18px;width:9.6px;text-align:center;font-size:7.3px;font-weight:bold;color:#f0f0f0;">N</div>
<div class="a" style="left:522.1px;top:410.7px;width:9.6px;height:8.8px;background:#3e3c43;border:1px solid #96949c;border-radius:1.5px"></div>
<div class="t" style="left:522.10px;top:411.58px;width:9.6px;text-align:center;font-size:7.3px;font-weight:bold;color:#f0f0f0;">E</div>
<div class="a" style="left:522.1px;top:421.1px;width:9.6px;height:8.8px;background:#3e3c43;border:1px solid #96949c;border-radius:1.5px"></div>
<div class="t" style="left:522.10px;top:421.98px;width:9.6px;text-align:center;font-size:7.3px;font-weight:bold;color:#f0f0f0;">D</div>
<div class="a" style="left:538.8px;top:344px;width:20.3px;height:101.5px;border:1.5px solid #9a9aa0;border-radius:3px"></div>
<div class="a" style="left:544.2px;top:379.5px;width:9.6px;height:8.8px;background:#3e3c43;border:1px solid #96949c;border-radius:1.5px"></div>
<div class="t" style="left:544.20px;top:380.38px;width:9.6px;text-align:center;font-size:7.3px;font-weight:bold;color:#f0f0f0;">M</div>
<div class="a" style="left:544.2px;top:389.9px;width:9.6px;height:8.8px;background:#3e3c43;border:1px solid #96949c;border-radius:1.5px"></div>
<div class="t" style="left:544.20px;top:390.78px;width:9.6px;text-align:center;font-size:7.3px;font-weight:bold;color:#f0f0f0;">E</div>
<div class="a" style="left:544.2px;top:400.3px;width:9.6px;height:8.8px;background:#3e3c43;border:1px solid #96949c;border-radius:1.5px"></div>
<div class="t" style="left:544.20px;top:401.18px;width:9.6px;text-align:center;font-size:7.3px;font-weight:bold;color:#f0f0f0;">D</div>
<div class="a" style="left:544.2px;top:410.7px;width:9.6px;height:8.8px;background:#3e3c43;border:1px solid #96949c;border-radius:1.5px"></div>
<div class="t" style="left:544.20px;top:411.58px;width:9.6px;text-align:center;font-size:7.3px;font-weight:bold;color:#f0f0f0;">C</div>
<div class="a" style="left:544.2px;top:421.1px;width:9.6px;height:8.8px;background:#3e3c43;border:1px solid #96949c;border-radius:1.5px"></div>
<div class="t" style="left:544.20px;top:421.98px;width:9.6px;text-align:center;font-size:7.3px;font-weight:bold;color:#f0f0f0;">L</div>
<div class="a" style="left:544.2px;top:431.5px;width:9.6px;height:8.8px;background:#3e3c43;border:1px solid #96949c;border-radius:1.5px"></div>
<div class="t" style="left:544.20px;top:432.77px;width:9.6px;text-align:center;font-size:6.5px;font-weight:bold;color:#f0f0f0;">+</div>
</body></html>
